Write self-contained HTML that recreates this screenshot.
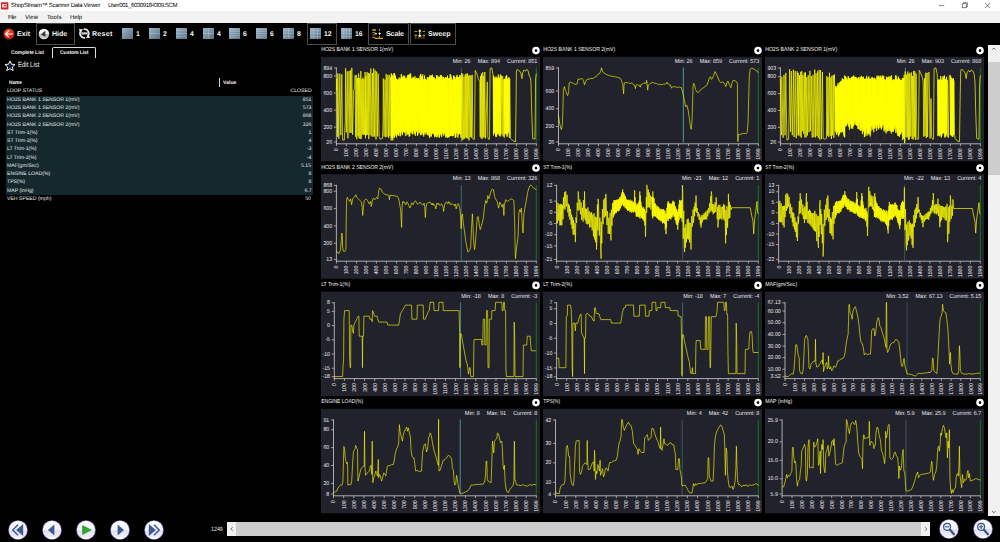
<!DOCTYPE html><html><head><meta charset="utf-8"><title>ShopStream Scanner Data Viewer</title>
<style>html,body{margin:0;padding:0;background:#000;overflow:hidden}#app{position:relative;width:1000px;height:542px;background:#000;overflow:hidden;font-family:'Liberation Sans',sans-serif;text-rendering:geometricPrecision}svg text{font-family:'Liberation Sans',sans-serif}</style></head><body><div id="app">
<div style="position:absolute;left:0.00px;top:0.00px;width:1000.00px;height:11.20px;background:#ffffff;"></div>
<div style="position:absolute;left:0.00px;top:11.20px;width:1000.00px;height:11.60px;background:#f2f2f2;"></div>
<svg style="position:absolute;left:1px;top:1.5px" width="8" height="8" viewBox="0 0 8 8"><rect x="0" y="0.3" width="7.4" height="7.2" rx="0.8" fill="#d8232a"/><rect x="1.2" y="2.2" width="4.6" height="3.2" fill="#fff"/><rect x="2.6" y="3.2" width="3.2" height="1.2" fill="#d8232a"/></svg>
<span style="position:absolute;top:2.49px;font:24.00px/1 'Liberation Sans',sans-serif;color:#000;white-space:nowrap;transform:scale(0.25,0.25);letter-spacing:-1.08px;left:11.20px;transform-origin:0 0;">ShopStream™ Scanner Data Viewer</span>
<span style="position:absolute;top:2.49px;font:24.00px/1 'Liberation Sans',sans-serif;color:#000;white-space:nowrap;transform:scale(0.25,0.25);letter-spacing:-1.50px;left:108.00px;transform-origin:0 0;">User001_60309184309.SCM</span>
<svg style="position:absolute;left:930px;top:0" width="70" height="11" viewBox="0 0 70 11"><g stroke="#333" stroke-width="0.6" fill="none"><path d="M9 5.6h5.2"/><rect x="32.2" y="3.8" width="4" height="4"/><path d="M33.4 3.8v-1.1h4v4h-1.2"/><path d="M55.2 3l5 5M60.2 3l-5 5"/></g></svg>
<span style="position:absolute;top:13.89px;font:24.00px/1 'Liberation Sans',sans-serif;color:#000;white-space:nowrap;transform:scale(0.25,0.25);letter-spacing:-1.82px;left:8.00px;transform-origin:0 0;">File</span>
<span style="position:absolute;top:13.89px;font:24.00px/1 'Liberation Sans',sans-serif;color:#000;white-space:nowrap;transform:scale(0.25,0.25);letter-spacing:0.14px;left:25.00px;transform-origin:0 0;">View</span>
<span style="position:absolute;top:13.89px;font:24.00px/1 'Liberation Sans',sans-serif;color:#000;white-space:nowrap;transform:scale(0.25,0.25);letter-spacing:0.49px;left:46.80px;transform-origin:0 0;">Tools</span>
<span style="position:absolute;top:13.89px;font:24.00px/1 'Liberation Sans',sans-serif;color:#000;white-space:nowrap;transform:scale(0.25,0.25);letter-spacing:-0.19px;left:70.00px;transform-origin:0 0;">Help</span>
<div style="position:absolute;left:36.20px;top:23.00px;width:38.60px;height:21.60px;border:1px solid #4d4d4d;box-sizing:border-box;"></div>
<div style="position:absolute;left:306.60px;top:23.00px;width:30.00px;height:21.60px;border:1px solid #4d4d4d;box-sizing:border-box;"></div>
<div style="position:absolute;left:368.20px;top:23.00px;width:41.20px;height:21.60px;border:1px solid #4d4d4d;box-sizing:border-box;"></div>
<div style="position:absolute;left:410.40px;top:23.00px;width:45.60px;height:21.60px;border:1px solid #4d4d4d;box-sizing:border-box;"></div>
<span style="position:absolute;top:29.90px;font:bold 28.40px/1 'Liberation Sans',sans-serif;color:#f4f4f4;white-space:nowrap;transform:scale(0.25,0.25);letter-spacing:-0.03px;left:17.20px;transform-origin:0 0;">Exit</span>
<span style="position:absolute;top:29.90px;font:bold 28.40px/1 'Liberation Sans',sans-serif;color:#f4f4f4;white-space:nowrap;transform:scale(0.25,0.25);letter-spacing:-0.25px;left:52.00px;transform-origin:0 0;">Hide</span>
<span style="position:absolute;top:29.90px;font:bold 28.40px/1 'Liberation Sans',sans-serif;color:#f4f4f4;white-space:nowrap;transform:scale(0.25,0.25);letter-spacing:0.96px;left:92.20px;transform-origin:0 0;">Reset</span>
<span style="position:absolute;top:29.90px;font:bold 28.40px/1 'Liberation Sans',sans-serif;color:#f4f4f4;white-space:nowrap;transform:scale(0.25,0.25);letter-spacing:-0.55px;left:385.80px;transform-origin:0 0;">Scale</span>
<span style="position:absolute;top:29.90px;font:bold 28.40px/1 'Liberation Sans',sans-serif;color:#f4f4f4;white-space:nowrap;transform:scale(0.25,0.25);letter-spacing:0.11px;left:427.60px;transform-origin:0 0;">Sweep</span>
<svg style="position:absolute;left:3px;top:27.5px" width="12" height="12" viewBox="0 0 12 12"><defs><radialGradient id="rg" cx="0.4" cy="0.3" r="0.8"><stop offset="0" stop-color="#f0522c"/><stop offset="0.6" stop-color="#d22a0e"/><stop offset="1" stop-color="#8e1905"/></radialGradient></defs><circle cx="6" cy="6" r="5.5" fill="url(#rg)"/><path d="M10 6H3M6 2.6L2.6 6l3.4 3.4" stroke="#fff" stroke-width="1.15" fill="none"/></svg>
<svg style="position:absolute;left:38px;top:27.5px" width="12" height="12" viewBox="0 0 12 12"><defs><linearGradient id="hg" x1="0" y1="0" x2="0" y2="1"><stop offset="0" stop-color="#ffffff"/><stop offset="0.5" stop-color="#e8e8e8"/><stop offset="0.52" stop-color="#b5b5b5"/><stop offset="1" stop-color="#dcdcdc"/></linearGradient></defs><circle cx="5.9" cy="6" r="5.3" fill="url(#hg)"/><path d="M7.4 2.6v6.4L3 6.4z" fill="#3a3a3a"/></svg>
<svg style="position:absolute;left:78px;top:27px" width="13" height="13" viewBox="0 0 13 13"><g fill="none" stroke="#e9e9e9" stroke-width="1.7"><path d="M7.15 10.75A4.3 4.3 0 0 1 3.2 3.6"/><path d="M5.65 2.25A4.3 4.3 0 0 1 9.6 9.4"/></g><path d="M0.9 1.9l4.2 0.3-3 3.1zM11.9 11.1l-4.2-0.3 3-3.1z" fill="#f2f2f2"/><rect x="2.7" y="5.1" width="7.6" height="2.7" rx="1.3" fill="#8c8c8c"/><path d="M3.5 6.45h6" stroke="#f4f4f4" stroke-width="0.7"/></svg>
<svg style="position:absolute;left:122px;top:28.0px" width="11.3" height="11.0" viewBox="0 0 11.3 11.0"><defs><linearGradient id="gi0" x1="0" y1="0" x2="1" y2="1"><stop offset="0" stop-color="#9db4c6"/><stop offset="1" stop-color="#566f80"/></linearGradient></defs><rect width="11.3" height="11.0" fill="url(#gi0)"/></svg>
<span style="position:absolute;top:30.06px;font:bold 27.20px/1 'Liberation Sans',sans-serif;color:#f4f4f4;white-space:nowrap;transform:scale(0.25,0.25);left:136.20px;transform-origin:0 0;">1</span>
<svg style="position:absolute;left:149px;top:28.0px" width="11.3" height="11.0" viewBox="0 0 11.3 11.0"><defs><linearGradient id="gi1" x1="0" y1="0" x2="1" y2="1"><stop offset="0" stop-color="#9db4c6"/><stop offset="1" stop-color="#566f80"/></linearGradient></defs><rect width="11.3" height="11.0" fill="url(#gi1)"/><path d="M0 5.50H11.3" stroke="#c4d4e0" stroke-width="0.5" opacity="0.85"/></svg>
<span style="position:absolute;top:30.06px;font:bold 27.20px/1 'Liberation Sans',sans-serif;color:#f4f4f4;white-space:nowrap;transform:scale(0.25,0.25);left:163.00px;transform-origin:0 0;">2</span>
<svg style="position:absolute;left:176px;top:28.0px" width="11.3" height="11.0" viewBox="0 0 11.3 11.0"><defs><linearGradient id="gi2" x1="0" y1="0" x2="1" y2="1"><stop offset="0" stop-color="#9db4c6"/><stop offset="1" stop-color="#566f80"/></linearGradient></defs><rect width="11.3" height="11.0" fill="url(#gi2)"/><path d="M0 2.75H11.3" stroke="#c4d4e0" stroke-width="0.5" opacity="0.85"/><path d="M0 5.50H11.3" stroke="#c4d4e0" stroke-width="0.5" opacity="0.85"/><path d="M0 8.25H11.3" stroke="#c4d4e0" stroke-width="0.5" opacity="0.85"/></svg>
<span style="position:absolute;top:30.06px;font:bold 27.20px/1 'Liberation Sans',sans-serif;color:#f4f4f4;white-space:nowrap;transform:scale(0.25,0.25);left:190.00px;transform-origin:0 0;">4</span>
<svg style="position:absolute;left:202.6px;top:28.0px" width="11.3" height="11.0" viewBox="0 0 11.3 11.0"><defs><linearGradient id="gi3" x1="0" y1="0" x2="1" y2="1"><stop offset="0" stop-color="#9db4c6"/><stop offset="1" stop-color="#566f80"/></linearGradient></defs><rect width="11.3" height="11.0" fill="url(#gi3)"/><path d="M0 5.50H11.3" stroke="#c4d4e0" stroke-width="0.5" opacity="0.85"/><path d="M5.65 0V11.0" stroke="#c4d4e0" stroke-width="0.5" opacity="0.85"/></svg>
<span style="position:absolute;top:30.06px;font:bold 27.20px/1 'Liberation Sans',sans-serif;color:#f4f4f4;white-space:nowrap;transform:scale(0.25,0.25);left:216.60px;transform-origin:0 0;">4</span>
<svg style="position:absolute;left:229.2px;top:28.0px" width="11.3" height="11.0" viewBox="0 0 11.3 11.0"><defs><linearGradient id="gi4" x1="0" y1="0" x2="1" y2="1"><stop offset="0" stop-color="#9db4c6"/><stop offset="1" stop-color="#566f80"/></linearGradient></defs><rect width="11.3" height="11.0" fill="url(#gi4)"/><path d="M0 1.83H11.3" stroke="#c4d4e0" stroke-width="0.5" opacity="0.85"/><path d="M0 3.67H11.3" stroke="#c4d4e0" stroke-width="0.5" opacity="0.85"/><path d="M0 5.50H11.3" stroke="#c4d4e0" stroke-width="0.5" opacity="0.85"/><path d="M0 7.33H11.3" stroke="#c4d4e0" stroke-width="0.5" opacity="0.85"/><path d="M0 9.17H11.3" stroke="#c4d4e0" stroke-width="0.5" opacity="0.85"/></svg>
<span style="position:absolute;top:30.06px;font:bold 27.20px/1 'Liberation Sans',sans-serif;color:#f4f4f4;white-space:nowrap;transform:scale(0.25,0.25);left:243.20px;transform-origin:0 0;">6</span>
<svg style="position:absolute;left:256px;top:28.0px" width="11.3" height="11.0" viewBox="0 0 11.3 11.0"><defs><linearGradient id="gi5" x1="0" y1="0" x2="1" y2="1"><stop offset="0" stop-color="#9db4c6"/><stop offset="1" stop-color="#566f80"/></linearGradient></defs><rect width="11.3" height="11.0" fill="url(#gi5)"/><path d="M0 1.83H11.3" stroke="#c4d4e0" stroke-width="0.5" opacity="0.85"/><path d="M0 3.67H11.3" stroke="#c4d4e0" stroke-width="0.5" opacity="0.85"/><path d="M0 5.50H11.3" stroke="#c4d4e0" stroke-width="0.5" opacity="0.85"/><path d="M0 7.33H11.3" stroke="#c4d4e0" stroke-width="0.5" opacity="0.85"/><path d="M0 9.17H11.3" stroke="#c4d4e0" stroke-width="0.5" opacity="0.85"/></svg>
<span style="position:absolute;top:30.06px;font:bold 27.20px/1 'Liberation Sans',sans-serif;color:#f4f4f4;white-space:nowrap;transform:scale(0.25,0.25);left:270.00px;transform-origin:0 0;">6</span>
<svg style="position:absolute;left:283px;top:28.0px" width="11.3" height="11.0" viewBox="0 0 11.3 11.0"><defs><linearGradient id="gi6" x1="0" y1="0" x2="1" y2="1"><stop offset="0" stop-color="#9db4c6"/><stop offset="1" stop-color="#566f80"/></linearGradient></defs><rect width="11.3" height="11.0" fill="url(#gi6)"/><path d="M0 2.75H11.3" stroke="#c4d4e0" stroke-width="0.5" opacity="0.85"/><path d="M0 5.50H11.3" stroke="#c4d4e0" stroke-width="0.5" opacity="0.85"/><path d="M0 8.25H11.3" stroke="#c4d4e0" stroke-width="0.5" opacity="0.85"/><path d="M5.65 0V11.0" stroke="#c4d4e0" stroke-width="0.5" opacity="0.85"/></svg>
<span style="position:absolute;top:30.06px;font:bold 27.20px/1 'Liberation Sans',sans-serif;color:#f4f4f4;white-space:nowrap;transform:scale(0.25,0.25);left:297.20px;transform-origin:0 0;">8</span>
<svg style="position:absolute;left:310px;top:28.0px" width="11.3" height="11.0" viewBox="0 0 11.3 11.0"><defs><linearGradient id="gi7" x1="0" y1="0" x2="1" y2="1"><stop offset="0" stop-color="#9db4c6"/><stop offset="1" stop-color="#566f80"/></linearGradient></defs><rect width="11.3" height="11.0" fill="url(#gi7)"/><path d="M0 2.75H11.3" stroke="#c4d4e0" stroke-width="0.5" opacity="0.85"/><path d="M0 5.50H11.3" stroke="#c4d4e0" stroke-width="0.5" opacity="0.85"/><path d="M0 8.25H11.3" stroke="#c4d4e0" stroke-width="0.5" opacity="0.85"/><path d="M3.77 0V11.0" stroke="#c4d4e0" stroke-width="0.5" opacity="0.85"/><path d="M7.53 0V11.0" stroke="#c4d4e0" stroke-width="0.5" opacity="0.85"/></svg>
<span style="position:absolute;top:30.06px;font:bold 27.20px/1 'Liberation Sans',sans-serif;color:#f4f4f4;white-space:nowrap;transform:scale(0.25,0.25);left:323.60px;transform-origin:0 0;">12</span>
<svg style="position:absolute;left:341px;top:28.0px" width="11.3" height="11.0" viewBox="0 0 11.3 11.0"><defs><linearGradient id="gi8" x1="0" y1="0" x2="1" y2="1"><stop offset="0" stop-color="#9db4c6"/><stop offset="1" stop-color="#566f80"/></linearGradient></defs><rect width="11.3" height="11.0" fill="url(#gi8)"/><path d="M0 2.75H11.3" stroke="#c4d4e0" stroke-width="0.5" opacity="0.85"/><path d="M0 5.50H11.3" stroke="#c4d4e0" stroke-width="0.5" opacity="0.85"/><path d="M0 8.25H11.3" stroke="#c4d4e0" stroke-width="0.5" opacity="0.85"/><path d="M2.83 0V11.0" stroke="#c4d4e0" stroke-width="0.5" opacity="0.85"/><path d="M5.65 0V11.0" stroke="#c4d4e0" stroke-width="0.5" opacity="0.85"/><path d="M8.48 0V11.0" stroke="#c4d4e0" stroke-width="0.5" opacity="0.85"/></svg>
<span style="position:absolute;top:30.06px;font:bold 27.20px/1 'Liberation Sans',sans-serif;color:#f4f4f4;white-space:nowrap;transform:scale(0.25,0.25);left:354.60px;transform-origin:0 0;">16</span>
<svg style="position:absolute;left:372px;top:28px" width="12" height="12" viewBox="0 0 12 12"><g stroke="#e2b200" fill="none"><path d="M0.3 2h3.6" stroke-width="1.5"/><path d="M0.2 4.65h2.8" stroke-width="0.8"/><path d="M0.3 6.9h2.4" stroke-width="1.2" opacity="0.6"/><path d="M0.2 9.35h2.8" stroke-width="0.9"/><path d="M2.8 10.35h8.2" stroke-width="1.1"/><path d="M7.55 1v1.8M7.55 7.8v2.4" stroke-width="0.9"/><path d="M2.9 9.4v0.6" stroke-width="0.8"/></g><path d="M3.9 4.3l0.5 1 1 0.5-1 0.5-0.5 1-0.5-1-1-0.5 1-0.5zM7.6 4l0.55 1.05 1.05 0.55-1.05 0.55L7.6 7.2l-0.55-1.05L6 5.6l1.05-0.55z" fill="#fff"/></svg>
<svg style="position:absolute;left:413.6px;top:28px" width="12" height="12" viewBox="0 0 12 12"><g stroke="#dcae00" fill="none"><path d="M0.4 3.45h3M8.6 3.45h2.4" stroke-width="0.9"/><path d="M0.4 7.25h3M8.6 7.25h2.6" stroke-width="1.1"/><g stroke-width="0.9" opacity="0.75"><path d="M1.8 7.8v3M4.7 7.8v3M7 7.8v3M9.9 7.8v3"/></g><path d="M10.9 0.3v7.4" stroke-width="0.7" opacity="0.45" stroke-dasharray="1.4 0.8"/></g><path d="M5.8 2v6.6" stroke="#fff" stroke-width="0.9"/><path d="M5.8 1.3l1.6 2.2H4.2zM5.8 6.4l1.5 1.3-1.5 1.3-1.5-1.3z" fill="#fff"/></svg>
<span style="position:absolute;top:49.52px;font:bold 20.80px/1 'Liberation Sans',sans-serif;color:#f0f0f0;white-space:nowrap;transform:scale(0.25,0.25);letter-spacing:-0.46px;left:11.00px;transform-origin:0 0;">Complete List</span>
<div style="position:absolute;left:51.6px;top:46.8px;width:44px;height:11px;border:1px solid #dcdcdc;border-bottom:none;border-radius:2px 2px 0 0;box-sizing:border-box"></div>
<span style="position:absolute;top:49.52px;font:bold 20.80px/1 'Liberation Sans',sans-serif;color:#f0f0f0;white-space:nowrap;transform:scale(0.25,0.25);letter-spacing:-0.58px;left:59.60px;transform-origin:0 0;">Custom List</span>
<svg style="position:absolute;left:4.4px;top:59.8px" width="12" height="12" viewBox="0 0 12 12"><path d="M6 0.9l1.45 3.3 3.6.35-2.7 2.4.8 3.55L6 8.65 2.85 10.5l.8-3.55-2.7-2.4 3.6-.35z" fill="#0c1c3c" stroke="#f2f2f2" stroke-width="1"/></svg>
<span style="position:absolute;top:61.48px;font:30.00px/1 'Liberation Sans',sans-serif;color:#f4f4f4;white-space:nowrap;transform:scale(0.2005329585053735,0.25);left:18.00px;transform-origin:0 0;">Edit List</span>
<span style="position:absolute;top:79.82px;font:bold 20.80px/1 'Liberation Sans',sans-serif;color:#f0f0f0;white-space:nowrap;transform:scale(0.22946963829848263,0.25);left:9.30px;transform-origin:0 0;">Name</span>
<div style="position:absolute;left:218.80px;top:77.60px;width:0.90px;height:9.00px;background:#d0d0d0;"></div>
<span style="position:absolute;top:79.82px;font:bold 20.80px/1 'Liberation Sans',sans-serif;color:#f0f0f0;white-space:nowrap;transform:scale(0.24655864392745838,0.25);left:223.00px;transform-origin:0 0;">Value</span>
<div style="position:absolute;left:6.00px;top:96.00px;width:307.00px;height:98.60px;background:#14282d;"></div>
<span style="position:absolute;top:88.44px;font:20.60px/1 'Liberation Sans',sans-serif;color:#e6e6e6;white-space:nowrap;transform:scale(0.25,0.25);left:7.40px;transform-origin:0 0;">LOOP STATUS</span>
<span style="position:absolute;top:88.44px;font:20.60px/1 'Liberation Sans',sans-serif;color:#e6e6e6;white-space:nowrap;transform:scale(0.25,0.25);right:688.80px;transform-origin:100% 0;">CLOSED</span>
<span style="position:absolute;top:96.71px;font:20.60px/1 'Liberation Sans',sans-serif;color:#e6e6e6;white-space:nowrap;transform:scale(0.25,0.25);left:7.40px;transform-origin:0 0;">HO2S BANK 1 SENSOR 1(mV)</span>
<span style="position:absolute;top:96.71px;font:20.60px/1 'Liberation Sans',sans-serif;color:#e6e6e6;white-space:nowrap;transform:scale(0.25,0.25);right:688.80px;transform-origin:100% 0;">851</span>
<span style="position:absolute;top:104.98px;font:20.60px/1 'Liberation Sans',sans-serif;color:#e6e6e6;white-space:nowrap;transform:scale(0.25,0.25);left:7.40px;transform-origin:0 0;">HO2S BANK 1 SENSOR 2(mV)</span>
<span style="position:absolute;top:104.98px;font:20.60px/1 'Liberation Sans',sans-serif;color:#e6e6e6;white-space:nowrap;transform:scale(0.25,0.25);right:688.80px;transform-origin:100% 0;">573</span>
<span style="position:absolute;top:113.25px;font:20.60px/1 'Liberation Sans',sans-serif;color:#e6e6e6;white-space:nowrap;transform:scale(0.25,0.25);left:7.40px;transform-origin:0 0;">HO2S BANK 2 SENSOR 1(mV)</span>
<span style="position:absolute;top:113.25px;font:20.60px/1 'Liberation Sans',sans-serif;color:#e6e6e6;white-space:nowrap;transform:scale(0.25,0.25);right:688.80px;transform-origin:100% 0;">868</span>
<span style="position:absolute;top:121.52px;font:20.60px/1 'Liberation Sans',sans-serif;color:#e6e6e6;white-space:nowrap;transform:scale(0.25,0.25);left:7.40px;transform-origin:0 0;">HO2S BANK 2 SENSOR 2(mV)</span>
<span style="position:absolute;top:121.52px;font:20.60px/1 'Liberation Sans',sans-serif;color:#e6e6e6;white-space:nowrap;transform:scale(0.25,0.25);right:688.80px;transform-origin:100% 0;">326</span>
<span style="position:absolute;top:129.79px;font:20.60px/1 'Liberation Sans',sans-serif;color:#e6e6e6;white-space:nowrap;transform:scale(0.25,0.25);left:7.40px;transform-origin:0 0;">ST Trim-1(%)</span>
<span style="position:absolute;top:129.79px;font:20.60px/1 'Liberation Sans',sans-serif;color:#e6e6e6;white-space:nowrap;transform:scale(0.25,0.25);right:688.80px;transform-origin:100% 0;">1</span>
<span style="position:absolute;top:138.06px;font:20.60px/1 'Liberation Sans',sans-serif;color:#e6e6e6;white-space:nowrap;transform:scale(0.25,0.25);left:7.40px;transform-origin:0 0;">ST Trim-2(%)</span>
<span style="position:absolute;top:138.06px;font:20.60px/1 'Liberation Sans',sans-serif;color:#e6e6e6;white-space:nowrap;transform:scale(0.25,0.25);right:688.80px;transform-origin:100% 0;">4</span>
<span style="position:absolute;top:146.33px;font:20.60px/1 'Liberation Sans',sans-serif;color:#e6e6e6;white-space:nowrap;transform:scale(0.25,0.25);left:7.40px;transform-origin:0 0;">LT Trim-1(%)</span>
<span style="position:absolute;top:146.33px;font:20.60px/1 'Liberation Sans',sans-serif;color:#e6e6e6;white-space:nowrap;transform:scale(0.25,0.25);right:688.80px;transform-origin:100% 0;">-3</span>
<span style="position:absolute;top:154.60px;font:20.60px/1 'Liberation Sans',sans-serif;color:#e6e6e6;white-space:nowrap;transform:scale(0.25,0.25);left:7.40px;transform-origin:0 0;">LT Trim-2(%)</span>
<span style="position:absolute;top:154.60px;font:20.60px/1 'Liberation Sans',sans-serif;color:#e6e6e6;white-space:nowrap;transform:scale(0.25,0.25);right:688.80px;transform-origin:100% 0;">-4</span>
<span style="position:absolute;top:162.87px;font:20.60px/1 'Liberation Sans',sans-serif;color:#e6e6e6;white-space:nowrap;transform:scale(0.25,0.25);left:7.40px;transform-origin:0 0;">MAF(gm/Sec)</span>
<span style="position:absolute;top:162.87px;font:20.60px/1 'Liberation Sans',sans-serif;color:#e6e6e6;white-space:nowrap;transform:scale(0.25,0.25);right:688.80px;transform-origin:100% 0;">5.15</span>
<span style="position:absolute;top:171.14px;font:20.60px/1 'Liberation Sans',sans-serif;color:#e6e6e6;white-space:nowrap;transform:scale(0.25,0.25);left:7.40px;transform-origin:0 0;">ENGINE LOAD(%)</span>
<span style="position:absolute;top:171.14px;font:20.60px/1 'Liberation Sans',sans-serif;color:#e6e6e6;white-space:nowrap;transform:scale(0.25,0.25);right:688.80px;transform-origin:100% 0;">8</span>
<span style="position:absolute;top:179.41px;font:20.60px/1 'Liberation Sans',sans-serif;color:#e6e6e6;white-space:nowrap;transform:scale(0.25,0.25);left:7.40px;transform-origin:0 0;">TPS(%)</span>
<span style="position:absolute;top:179.41px;font:20.60px/1 'Liberation Sans',sans-serif;color:#e6e6e6;white-space:nowrap;transform:scale(0.25,0.25);right:688.80px;transform-origin:100% 0;">8</span>
<span style="position:absolute;top:187.68px;font:20.60px/1 'Liberation Sans',sans-serif;color:#e6e6e6;white-space:nowrap;transform:scale(0.25,0.25);left:7.40px;transform-origin:0 0;">MAP (inHg)</span>
<span style="position:absolute;top:187.68px;font:20.60px/1 'Liberation Sans',sans-serif;color:#e6e6e6;white-space:nowrap;transform:scale(0.25,0.25);right:688.80px;transform-origin:100% 0;">6.7</span>
<span style="position:absolute;top:195.95px;font:20.60px/1 'Liberation Sans',sans-serif;color:#e6e6e6;white-space:nowrap;transform:scale(0.25,0.25);left:7.40px;transform-origin:0 0;">VEH SPEED (mph)</span>
<span style="position:absolute;top:195.95px;font:20.60px/1 'Liberation Sans',sans-serif;color:#e6e6e6;white-space:nowrap;transform:scale(0.25,0.25);right:688.80px;transform-origin:100% 0;">50</span>
<svg style="position:absolute;left:6.6px;top:518.7px" width="22" height="22" viewBox="-11 -11 22 22"><defs><linearGradient id="rb0" x1="0" y1="0" x2="0" y2="1"><stop offset="0" stop-color="#ffffff"/><stop offset="0.5" stop-color="#f3f3fb"/><stop offset="0.53" stop-color="#e0e0f1"/><stop offset="0.85" stop-color="#ececf8"/><stop offset="1" stop-color="#ffffff"/></linearGradient></defs><circle r="9.8" fill="#7466b4"/><circle r="9.200000000000001" fill="url(#rb0)"/><path d="M5.2 -5.9v11.8L-1.9 0z" fill="#3d5b93"/><path d="M0 -5.3L-5.2 0 0 5.3" fill="none" stroke="#3d5b93" stroke-width="1.5"/></svg>
<svg style="position:absolute;left:41.0px;top:518.7px" width="22" height="22" viewBox="-11 -11 22 22"><defs><linearGradient id="rb1" x1="0" y1="0" x2="0" y2="1"><stop offset="0" stop-color="#ffffff"/><stop offset="0.5" stop-color="#f3f3fb"/><stop offset="0.53" stop-color="#e0e0f1"/><stop offset="0.85" stop-color="#ececf8"/><stop offset="1" stop-color="#ffffff"/></linearGradient></defs><circle r="9.8" fill="#7466b4"/><circle r="9.200000000000001" fill="url(#rb1)"/><path d="M2.4 -5.6v11.2L-4 0z" fill="#3d5b93"/></svg>
<svg style="position:absolute;left:75.0px;top:518.7px" width="22" height="22" viewBox="-11 -11 22 22"><defs><linearGradient id="rb2" x1="0" y1="0" x2="0" y2="1"><stop offset="0" stop-color="#ffffff"/><stop offset="0.5" stop-color="#f3f3fb"/><stop offset="0.53" stop-color="#e0e0f1"/><stop offset="0.85" stop-color="#ececf8"/><stop offset="1" stop-color="#ffffff"/></linearGradient></defs><circle r="9.8" fill="#7466b4"/><circle r="9.200000000000001" fill="url(#rb2)"/><path d="M-3.8 -4.9v9.8L6 0z" fill="#2ea32e"/></svg>
<svg style="position:absolute;left:109.0px;top:518.7px" width="22" height="22" viewBox="-11 -11 22 22"><defs><linearGradient id="rb3" x1="0" y1="0" x2="0" y2="1"><stop offset="0" stop-color="#ffffff"/><stop offset="0.5" stop-color="#f3f3fb"/><stop offset="0.53" stop-color="#e0e0f1"/><stop offset="0.85" stop-color="#ececf8"/><stop offset="1" stop-color="#ffffff"/></linearGradient></defs><circle r="9.8" fill="#7466b4"/><circle r="9.200000000000001" fill="url(#rb3)"/><path d="M-2.4 -5.6v11.2L4 0z" fill="#3d5b93"/></svg>
<svg style="position:absolute;left:143.0px;top:518.7px" width="22" height="22" viewBox="-11 -11 22 22"><defs><linearGradient id="rb4" x1="0" y1="0" x2="0" y2="1"><stop offset="0" stop-color="#ffffff"/><stop offset="0.5" stop-color="#f3f3fb"/><stop offset="0.53" stop-color="#e0e0f1"/><stop offset="0.85" stop-color="#ececf8"/><stop offset="1" stop-color="#ffffff"/></linearGradient></defs><circle r="9.8" fill="#7466b4"/><circle r="9.200000000000001" fill="url(#rb4)"/><path d="M-5.2 -5.9v11.8L1.9 0z" fill="#3d5b93"/><path d="M0 -5.3L5.2 0 0 5.3" fill="none" stroke="#3d5b93" stroke-width="1.5"/></svg>
<svg style="position:absolute;left:937.7px;top:518.2px" width="22" height="22" viewBox="-11 -11 22 22"><defs><linearGradient id="rb5" x1="0" y1="0" x2="0" y2="1"><stop offset="0" stop-color="#ffffff"/><stop offset="0.5" stop-color="#f3f3fb"/><stop offset="0.53" stop-color="#e0e0f1"/><stop offset="0.85" stop-color="#ececf8"/><stop offset="1" stop-color="#ffffff"/></linearGradient></defs><circle r="9.8" fill="#7466b4"/><circle r="9.200000000000001" fill="url(#rb5)"/><circle cx="-1.9" cy="-2.2" r="3.5" fill="#f0f2fb" stroke="#3c5488" stroke-width="1.2"/><path d="M1 0.8L4.9 5.2" stroke="#3c5488" stroke-width="2.3" stroke-linecap="round"/><path d="M-4 -2.2h4.2" stroke="#3c5488" stroke-width="1.1"/></svg>
<svg style="position:absolute;left:972.0px;top:518.2px" width="22" height="22" viewBox="-11 -11 22 22"><defs><linearGradient id="rb6" x1="0" y1="0" x2="0" y2="1"><stop offset="0" stop-color="#ffffff"/><stop offset="0.5" stop-color="#f3f3fb"/><stop offset="0.53" stop-color="#e0e0f1"/><stop offset="0.85" stop-color="#ececf8"/><stop offset="1" stop-color="#ffffff"/></linearGradient></defs><circle r="9.8" fill="#7466b4"/><circle r="9.200000000000001" fill="url(#rb6)"/><circle cx="-1.9" cy="-2.2" r="3.5" fill="#f0f2fb" stroke="#3c5488" stroke-width="1.2"/><path d="M1 0.8L4.9 5.2" stroke="#3c5488" stroke-width="2.3" stroke-linecap="round"/><path d="M-4 -2.2h4.2" stroke="#3c5488" stroke-width="1.1"/><path d="M-1.9 -4.3v4.2" stroke="#3c5488" stroke-width="1.1"/></svg>
<span style="position:absolute;top:526.38px;font:24.80px/1 'Liberation Sans',sans-serif;color:#e8e8e8;white-space:nowrap;transform:scale(0.21387563494329123,0.25);left:211.00px;transform-origin:0 0;">1249</span>
<div style="position:absolute;left:227.40px;top:522.40px;width:702.40px;height:13.40px;background:#cdcdcd;"></div>
<div style="position:absolute;left:227.40px;top:522.40px;width:8.60px;height:13.40px;background:#f0f0f0;"></div>
<div style="position:absolute;left:921.00px;top:522.40px;width:8.80px;height:13.40px;background:#f0f0f0;"></div>
<svg style="position:absolute;left:227px;top:522px" width="703" height="14" viewBox="0 0 703 14"><path d="M5.6 5.2L3.8 7l1.8 1.8M698 5.2l1.8 1.8-1.8 1.8" stroke="#505050" stroke-width="0.8" fill="none"/></svg>
<div style="position:absolute;left:988.20px;top:44.80px;width:11.80px;height:471.20px;background:#f0f0f0;"></div>
<div style="position:absolute;left:988.20px;top:61.60px;width:11.80px;height:113.60px;background:#cdcdcd;"></div>
<svg style="position:absolute;left:988px;top:45px" width="12" height="471" viewBox="0 0 12 471"><path d="M4 4.8L5.8 3l1.8 1.8M4 466L5.8 467.8l1.8-1.8" stroke="#505050" stroke-width="0.8" fill="none"/></svg>
<svg style="position:absolute;left:0;top:0" width="1000" height="542" viewBox="0 0 1000 542" text-rendering="geometricPrecision"><rect x="321" y="56.8" width="219" height="104.5" fill="#22222c"/><text x="321.2" y="51.40" font-size="5.8" fill="#f6f6f6" textLength="72" lengthAdjust="spacingAndGlyphs">HO2S BANK 1 SENSOR 1(mV)</text><circle cx="536" cy="50.60" r="2.55" fill="none" stroke="#fff" stroke-width="2.5"/><text transform="translate(537.30 62.70) scale(0.92 1)" font-size="5.92" fill="#ececec" text-anchor="end">Current: 851</text><text transform="translate(500.00 62.70) scale(0.92 1)" font-size="5.92" fill="#ececec" text-anchor="end">Max: 894</text><text transform="translate(470.59 62.70) scale(0.92 1)" font-size="5.92" fill="#ececec" text-anchor="end">Min: 26</text><path d="M336.40 67.40V144.20M336.00 143.80H536.80" stroke="#cfcfcf" stroke-width="0.8" fill="none"/><text transform="translate(332.10 69.60) scale(0.92 1)" font-size="5.65" fill="#ececec" text-anchor="end">894</text><text transform="translate(332.10 77.61) scale(0.92 1)" font-size="5.65" fill="#ececec" text-anchor="end">800</text><text transform="translate(332.10 94.66) scale(0.92 1)" font-size="5.65" fill="#ececec" text-anchor="end">600</text><text transform="translate(332.10 111.72) scale(0.92 1)" font-size="5.65" fill="#ececec" text-anchor="end">400</text><text transform="translate(332.10 128.77) scale(0.92 1)" font-size="5.65" fill="#ececec" text-anchor="end">200</text><text transform="translate(332.10 143.60) scale(0.92 1)" font-size="5.65" fill="#ececec" text-anchor="end">26</text><text transform="translate(338.35 148.30) rotate(-90) scale(0.92 1)" font-size="5.65" fill="#ececec" text-anchor="end">0</text><text transform="translate(348.35 148.30) rotate(-90) scale(0.92 1)" font-size="5.65" fill="#ececec" text-anchor="end">100</text><text transform="translate(358.35 148.30) rotate(-90) scale(0.92 1)" font-size="5.65" fill="#ececec" text-anchor="end">200</text><text transform="translate(368.35 148.30) rotate(-90) scale(0.92 1)" font-size="5.65" fill="#ececec" text-anchor="end">300</text><text transform="translate(378.35 148.30) rotate(-90) scale(0.92 1)" font-size="5.65" fill="#ececec" text-anchor="end">400</text><text transform="translate(388.35 148.30) rotate(-90) scale(0.92 1)" font-size="5.65" fill="#ececec" text-anchor="end">500</text><text transform="translate(398.35 148.30) rotate(-90) scale(0.92 1)" font-size="5.65" fill="#ececec" text-anchor="end">600</text><text transform="translate(408.35 148.30) rotate(-90) scale(0.92 1)" font-size="5.65" fill="#ececec" text-anchor="end">700</text><text transform="translate(418.35 148.30) rotate(-90) scale(0.92 1)" font-size="5.65" fill="#ececec" text-anchor="end">800</text><text transform="translate(428.35 148.30) rotate(-90) scale(0.92 1)" font-size="5.65" fill="#ececec" text-anchor="end">900</text><text transform="translate(438.35 148.30) rotate(-90) scale(0.92 1)" font-size="5.65" fill="#ececec" text-anchor="end">1000</text><text transform="translate(448.35 148.30) rotate(-90) scale(0.92 1)" font-size="5.65" fill="#ececec" text-anchor="end">1100</text><text transform="translate(458.35 148.30) rotate(-90) scale(0.92 1)" font-size="5.65" fill="#ececec" text-anchor="end">1200</text><text transform="translate(468.35 148.30) rotate(-90) scale(0.92 1)" font-size="5.65" fill="#ececec" text-anchor="end">1300</text><text transform="translate(478.35 148.30) rotate(-90) scale(0.92 1)" font-size="5.65" fill="#ececec" text-anchor="end">1400</text><text transform="translate(488.35 148.30) rotate(-90) scale(0.92 1)" font-size="5.65" fill="#ececec" text-anchor="end">1500</text><text transform="translate(498.35 148.30) rotate(-90) scale(0.92 1)" font-size="5.65" fill="#ececec" text-anchor="end">1600</text><text transform="translate(508.35 148.30) rotate(-90) scale(0.92 1)" font-size="5.65" fill="#ececec" text-anchor="end">1700</text><text transform="translate(518.35 148.30) rotate(-90) scale(0.92 1)" font-size="5.65" fill="#ececec" text-anchor="end">1800</text><text transform="translate(528.35 148.30) rotate(-90) scale(0.92 1)" font-size="5.65" fill="#ececec" text-anchor="end">1900</text><text transform="translate(538.25 148.30) rotate(-90) scale(0.92 1)" font-size="5.65" fill="#ececec" text-anchor="end">1999</text><path d="M333.80 68.00H336.40M333.80 76.01H336.40M333.80 93.06H336.40M333.80 110.12H336.40M333.80 127.17H336.40M333.80 142.00H336.40M336.40 143.80V146.20M346.40 143.80V146.20M356.40 143.80V146.20M366.40 143.80V146.20M376.40 143.80V146.20M386.40 143.80V146.20M396.40 143.80V146.20M406.40 143.80V146.20M416.40 143.80V146.20M426.40 143.80V146.20M436.40 143.80V146.20M446.40 143.80V146.20M456.40 143.80V146.20M466.40 143.80V146.20M476.40 143.80V146.20M486.40 143.80V146.20M496.40 143.80V146.20M506.40 143.80V146.20M516.40 143.80V146.20M526.40 143.80V146.20M536.30 143.80V146.20" stroke="#cfcfcf" stroke-width="0.7" fill="none"/><path d="M461.30 67.60V142.60" stroke="#5cb4ba" stroke-width="0.8" opacity="0.5"/><path d="M536.30 67.60V142.60" stroke="#0f8a14" stroke-width="0.8"/><polygon points="390.8,77.8 391.3,73.4 391.9,74.6 392.4,75.9 393.2,78.3 393.8,73.4 394.6,73.4 395.4,75.6 396.1,78.7 396.9,79.1 397.7,79.9 398.5,79.6 399.2,77.5 399.9,80.5 400.6,78.7 401.3,73.9 402.1,76.8 402.7,77.8 403.3,75.5 404.0,79.9 404.7,75.7 405.4,79.2 406.1,77.5 406.8,79.4 407.6,75.3 408.2,74.8 408.8,75.6 409.5,73.8 410.0,78.5 410.7,73.4 411.2,79.3 411.8,77.9 412.4,79.2 413.1,76.8 413.7,78.5 414.3,78.4 415.0,76.2 415.7,80.1 416.4,77.9 417.1,79.7 417.8,78.0 418.5,78.0 419.3,80.4 420.1,75.6 420.8,73.9 421.5,76.8 422.0,79.1 422.7,74.3 423.3,79.4 424.0,80.2 424.6,75.4 425.3,79.4 426.0,79.5 426.8,80.4 427.4,77.2 428.0,80.4 428.7,77.4 429.3,77.2 430.0,75.2 430.6,79.2 430.3,132.2 429.6,138.1 429.0,136.0 428.3,133.7 427.7,135.1 427.1,134.7 426.4,131.8 425.7,132.4 425.0,134.6 424.3,131.4 423.7,136.6 422.9,133.3 422.3,131.8 421.8,135.1 421.1,133.1 420.5,135.2 419.7,132.9 418.9,130.6 418.1,134.3 417.5,136.0 416.8,131.9 416.0,130.1 415.4,135.8 414.6,133.7 414.0,131.3 413.4,129.4 412.9,134.3 412.1,134.0 411.5,130.4 411.0,132.7 410.3,131.7 409.8,135.9 409.2,136.7 408.5,134.1 407.9,132.9 407.2,134.8 406.4,130.6 405.8,136.1 405.1,131.2 404.3,133.0 403.7,131.3 403.1,131.9 402.3,135.4 401.7,130.7 400.9,134.0 400.3,136.3 399.5,131.8 398.8,136.0 398.1,134.7 397.3,134.4 396.5,137.5 395.8,132.9 395.0,136.1 394.2,138.0 393.5,134.1 392.8,140.4 392.2,137.7 391.6,136.9 391.1,140.5" fill="#ffff00"/><path d="M396.93 79.8V112.4M418.70 117.5V140.8M422.37 79.8V93.0M408.99 79.8V116.9M428.09 79.8V99.5M421.13 79.8V95.8M398.60 79.8V108.3M428.72 79.8V117.6M412.86 125.2V140.8M397.50 111.3V140.8M391.49 79.8V112.5M413.28 79.8V114.4M426.79 79.8V103.3M416.06 111.3V140.8M412.80 121.0V140.8M419.15 118.9V140.8M402.54 79.8V105.6M404.61 116.1V140.8" stroke="#4a4a14" stroke-width="0.4" opacity="0.85" fill="none"/><polygon points="430.0,76.8 430.7,79.5 431.1,75.1 431.7,76.1 432.5,74.7 433.1,77.1 433.7,77.1 434.3,77.8 435.0,79.1 435.7,79.3 436.4,75.2 437.1,75.4 437.7,78.9 438.3,76.4 438.9,78.0 439.6,77.0 440.4,75.1 440.8,77.2 441.4,75.0 442.1,79.5 442.8,76.7 443.5,77.0 444.1,78.1 444.8,78.4 445.4,77.0 446.0,78.2 446.7,77.5 447.5,75.5 448.3,78.8 449.0,78.1 449.7,78.3 450.2,74.0 450.9,75.3 451.6,77.9 452.3,79.9 453.0,79.8 453.6,75.5 454.2,76.2 454.9,77.2 455.6,79.9 456.2,77.5 457.0,74.9 457.6,77.6 458.2,77.1 458.8,77.9 459.6,75.7 460.0,74.9 460.8,78.4 461.5,74.4 461.1,138.0 460.4,134.4 459.8,133.5 459.2,133.8 458.6,134.3 457.9,137.7 457.3,133.1 456.6,132.4 455.9,136.9 455.2,137.9 454.5,133.6 454.0,132.4 453.3,135.8 452.6,136.3 452.0,135.3 451.3,136.1 450.6,135.9 449.9,134.1 449.4,136.7 448.6,137.4 447.9,136.5 447.1,138.0 446.4,135.8 445.6,137.4 445.1,133.2 444.5,133.2 443.8,135.7 443.2,134.0 442.4,132.5 441.7,137.1 441.2,135.5 440.6,132.7 440.0,135.1 439.3,137.9 438.7,132.2 438.0,136.8 437.5,133.6 436.8,137.4 436.0,134.0 435.3,136.5 434.7,137.2 434.0,133.3 433.4,134.3 432.8,133.6 432.1,132.7 431.4,136.2 430.9,136.7 430.3,133.2" fill="#ffff00"/><path d="M445.25 125.1V140.8M457.66 113.9V140.8M456.35 123.1V140.8M453.89 79.8V104.6M448.27 79.8V109.7M456.77 79.8V111.9M452.04 79.8V92.2M448.66 79.8V99.5M449.45 123.8V140.8M447.83 79.8V91.2M433.98 79.8V105.5M452.46 79.8V101.7M459.06 79.8V110.8M449.36 118.3V140.8" stroke="#4a4a14" stroke-width="0.4" opacity="0.85" fill="none"/><polygon points="493.1,74.5 493.9,76.2 494.6,78.4 495.3,78.8 496.0,76.5 496.7,77.9 497.5,78.4 498.3,74.5 499.0,77.3 499.7,78.6 500.4,74.4 500.7,136.4 500.0,133.4 499.4,136.2 498.8,132.6 498.0,134.6 497.2,134.0 496.3,136.9 495.7,136.7 495.1,132.5 494.3,133.3 493.5,135.4" fill="#ffff00"/><path d="M497.22 112.0V140.8M498.90 109.7V140.8M494.93 79.8V93.4" stroke="#4a4a14" stroke-width="0.4" opacity="0.85" fill="none"/><polygon points="503.8,79.4 504.6,78.7 505.2,79.5 506.0,76.1 506.7,75.1 507.5,78.9 508.3,79.2 508.9,77.2 509.7,78.8 509.3,137.9 508.6,132.2 507.8,133.1 507.1,136.8 506.4,134.4 505.7,133.6 504.9,134.0 504.2,137.5" fill="#ffff00"/><path d="M504.95 111.3V140.8M504.59 116.8V140.8" stroke="#4a4a14" stroke-width="0.4" opacity="0.85" fill="none"/><polyline points="336.4,90.2 336.9,78.6 337.6,136.7 337.8,73.4 338.8,138.8 339.8,73.7 340.8,135.2 341.8,74.3 342.6,140.1 344.3,140.1 345.3,120.1 345.6,68.3 346.3,132.4 347.3,71.3 347.9,138.3 349.0,71.1 349.9,132.8 350.4,70.4 351.1,133.0 351.8,67.9 352.6,134.7 353.7,90.2 354.7,88.6 355.1,75.4 355.7,136.7 356.3,74.9 356.8,139.2 357.5,78.1 358.1,135.8 358.6,73.5 359.0,138.1 359.6,78.2 360.1,139.0 360.8,71.1 361.2,138.8 361.8,79.3 362.3,134.6 362.9,77.6 363.4,134.7 363.9,79.1 364.6,134.8 365.1,72.0 365.5,138.2 365.9,75.8 366.5,135.2 367.1,72.2 367.7,134.8 368.3,72.9 368.8,139.1 369.4,73.6 370.1,135.3 370.7,78.2 370.8,68.5 371.8,136.4 372.4,72.9 373.1,136.8 373.7,68.4 374.5,136.5 375.2,70.3 376.0,139.4 376.7,71.6 377.6,136.3 378.2,73.8 379.1,136.6 380.0,139.2 382.5,138.4 383.0,123.4 383.3,78.5 384.1,136.6 385.0,79.5 385.7,137.3 386.2,73.9 387.0,136.7 387.8,75.3 388.6,137.9 389.2,74.8 389.9,136.1 390.5,77.3 390.8,77.8 391.1,140.5 391.3,73.4 391.6,136.9 391.9,74.6 392.2,137.7 392.4,75.9 392.8,140.4 393.2,78.3 393.5,134.1 393.8,73.4 394.2,138.0 394.6,73.4 395.0,136.1 395.4,75.6 395.8,132.9 396.1,78.7 396.5,137.5 396.9,79.1 397.3,134.4 397.7,79.9 398.1,134.7 398.5,79.6 398.8,136.0 399.2,77.5 399.5,131.8 399.9,80.5 400.3,136.3 400.6,78.7 400.9,134.0 401.3,73.9 401.7,130.7 402.1,76.8 402.3,135.4 402.7,77.8 403.1,131.9 403.3,75.5 403.7,131.3 404.0,79.9 404.3,133.0 404.7,75.7 405.1,131.2 405.4,79.2 405.8,136.1 406.1,77.5 406.4,130.6 406.8,79.4 407.2,134.8 407.6,75.3 407.9,132.9 408.2,74.8 408.5,134.1 408.8,75.6 409.2,136.7 409.5,73.8 409.8,135.9 410.0,78.5 410.3,131.7 410.7,73.4 411.0,132.7 411.2,79.3 411.5,130.4 411.8,77.9 412.1,134.0 412.4,79.2 412.9,134.3 413.1,76.8 413.4,129.4 413.7,78.5 414.0,131.3 414.3,78.4 414.6,133.7 415.0,76.2 415.4,135.8 415.7,80.1 416.0,130.1 416.4,77.9 416.8,131.9 417.1,79.7 417.5,136.0 417.8,78.0 418.1,134.3 418.5,78.0 418.9,130.6 419.3,80.4 419.7,132.9 420.1,75.6 420.5,135.2 420.8,73.9 421.1,133.1 421.5,76.8 421.8,135.1 422.0,79.1 422.3,131.8 422.7,74.3 422.9,133.3 423.3,79.4 423.7,136.6 424.0,80.2 424.3,131.4 424.6,75.4 425.0,134.6 425.3,79.4 425.7,132.4 426.0,79.5 426.4,131.8 426.8,80.4 427.1,134.7 427.4,77.2 427.7,135.1 428.0,80.4 428.3,133.7 428.7,77.4 429.0,136.0 429.3,77.2 429.6,138.1 430.0,75.2 430.3,132.2 430.6,79.2 430.0,76.8 430.3,133.2 430.7,79.5 430.9,136.7 431.1,75.1 431.4,136.2 431.7,76.1 432.1,132.7 432.5,74.7 432.8,133.6 433.1,77.1 433.4,134.3 433.7,77.1 434.0,133.3 434.3,77.8 434.7,137.2 435.0,79.1 435.3,136.5 435.7,79.3 436.0,134.0 436.4,75.2 436.8,137.4 437.1,75.4 437.5,133.6 437.7,78.9 438.0,136.8 438.3,76.4 438.7,132.2 438.9,78.0 439.3,137.9 439.6,77.0 440.0,135.1 440.4,75.1 440.6,132.7 440.8,77.2 441.2,135.5 441.4,75.0 441.7,137.1 442.1,79.5 442.4,132.5 442.8,76.7 443.2,134.0 443.5,77.0 443.8,135.7 444.1,78.1 444.5,133.2 444.8,78.4 445.1,133.2 445.4,77.0 445.6,137.4 446.0,78.2 446.4,135.8 446.7,77.5 447.1,138.0 447.5,75.5 447.9,136.5 448.3,78.8 448.6,137.4 449.0,78.1 449.4,136.7 449.7,78.3 449.9,134.1 450.2,74.0 450.6,135.9 450.9,75.3 451.3,136.1 451.6,77.9 452.0,135.3 452.3,79.9 452.6,136.3 453.0,79.8 453.3,135.8 453.6,75.5 454.0,132.4 454.2,76.2 454.5,133.6 454.9,77.2 455.2,137.9 455.6,79.9 455.9,136.9 456.2,77.5 456.6,132.4 457.0,74.9 457.3,133.1 457.6,77.6 457.9,137.7 458.2,77.1 458.6,134.3 458.8,77.9 459.2,133.8 459.6,75.7 459.8,133.5 460.0,74.9 460.4,134.4 460.8,78.4 461.1,138.0 461.5,74.4 461.6,73.1 462.2,140.3 462.7,73.8 463.4,139.3 464.0,76.8 464.7,138.8 465.2,74.4 465.8,137.2 466.2,73.8 466.7,138.2 467.3,73.3 467.8,138.7 468.4,75.5 469.0,140.4 469.8,75.2 470.3,136.9 471.0,75.5 471.6,137.8 472.2,74.8 472.9,139.2 474.5,139.2 475.2,70.3 476.5,72.8 478.2,78.6 479.8,81.9 480.2,136.7 480.5,75.9 481.1,138.4 481.5,73.6 482.2,138.9 482.8,72.2 483.2,136.8 483.7,76.1 484.1,137.7 484.8,72.0 485.6,138.4 486.5,106.8 487.3,81.9 487.8,136.7 488.5,139.2 489.5,139.2 490.1,68.6 491.8,67.8 492.8,73.6 493.1,74.5 493.5,135.4 493.9,76.2 494.3,133.3 494.6,78.4 495.1,132.5 495.3,78.8 495.7,136.7 496.0,76.5 496.3,136.9 496.7,77.9 497.2,134.0 497.5,78.4 498.0,134.6 498.3,74.5 498.8,132.6 499.0,77.3 499.4,136.2 499.7,78.6 500.0,133.4 500.4,74.4 500.7,136.4 501.4,75.6 502.0,134.2 502.7,76.1 503.2,136.3 503.8,79.4 504.2,137.5 504.6,78.7 504.9,134.0 505.2,79.5 505.7,133.6 506.0,76.1 506.4,134.4 506.7,75.1 507.1,136.8 507.5,78.9 507.8,133.1 508.3,79.2 508.6,132.2 508.9,77.2 509.3,137.9 509.7,78.8 510.6,138.4 513.1,140.9 515.5,141.7 516.0,106.8 516.4,71.1 517.2,69.5 519.7,71.1 521.0,73.6 521.9,78.6 522.7,72.8 523.9,70.0 525.5,71.1 526.3,69.5 528.0,70.3 529.3,76.1 530.5,77.8 531.0,83.6 531.7,111.8 532.7,138.4 535.0,139.2 535.3,111.8 535.6,78.6 536.3,73.6" fill="none" stroke="#ffff00" stroke-width="0.7" stroke-linejoin="round"/><rect x="543" y="56.8" width="219" height="104.5" fill="#22222c"/><text x="543.2" y="51.40" font-size="5.8" fill="#f6f6f6" textLength="72" lengthAdjust="spacingAndGlyphs">HO2S BANK 1 SENSOR 2(mV)</text><circle cx="758" cy="50.60" r="2.55" fill="none" stroke="#fff" stroke-width="2.5"/><text transform="translate(759.30 62.70) scale(0.92 1)" font-size="5.92" fill="#ececec" text-anchor="end">Current: 573</text><text transform="translate(722.00 62.70) scale(0.92 1)" font-size="5.92" fill="#ececec" text-anchor="end">Max: 859</text><text transform="translate(692.59 62.70) scale(0.92 1)" font-size="5.92" fill="#ececec" text-anchor="end">Min: 26</text><path d="M558.50 67.40V144.20M558.10 143.80H758.80" stroke="#cfcfcf" stroke-width="0.8" fill="none"/><text transform="translate(554.20 69.60) scale(0.92 1)" font-size="5.65" fill="#ececec" text-anchor="end">859</text><text transform="translate(554.20 92.61) scale(0.92 1)" font-size="5.65" fill="#ececec" text-anchor="end">600</text><text transform="translate(554.20 110.38) scale(0.92 1)" font-size="5.65" fill="#ececec" text-anchor="end">400</text><text transform="translate(554.20 128.14) scale(0.92 1)" font-size="5.65" fill="#ececec" text-anchor="end">200</text><text transform="translate(554.20 143.60) scale(0.92 1)" font-size="5.65" fill="#ececec" text-anchor="end">26</text><text transform="translate(560.45 148.30) rotate(-90) scale(0.92 1)" font-size="5.65" fill="#ececec" text-anchor="end">0</text><text transform="translate(570.44 148.30) rotate(-90) scale(0.92 1)" font-size="5.65" fill="#ececec" text-anchor="end">100</text><text transform="translate(580.44 148.30) rotate(-90) scale(0.92 1)" font-size="5.65" fill="#ececec" text-anchor="end">200</text><text transform="translate(590.43 148.30) rotate(-90) scale(0.92 1)" font-size="5.65" fill="#ececec" text-anchor="end">300</text><text transform="translate(600.43 148.30) rotate(-90) scale(0.92 1)" font-size="5.65" fill="#ececec" text-anchor="end">400</text><text transform="translate(610.42 148.30) rotate(-90) scale(0.92 1)" font-size="5.65" fill="#ececec" text-anchor="end">500</text><text transform="translate(620.42 148.30) rotate(-90) scale(0.92 1)" font-size="5.65" fill="#ececec" text-anchor="end">600</text><text transform="translate(630.41 148.30) rotate(-90) scale(0.92 1)" font-size="5.65" fill="#ececec" text-anchor="end">700</text><text transform="translate(640.41 148.30) rotate(-90) scale(0.92 1)" font-size="5.65" fill="#ececec" text-anchor="end">800</text><text transform="translate(650.40 148.30) rotate(-90) scale(0.92 1)" font-size="5.65" fill="#ececec" text-anchor="end">900</text><text transform="translate(660.40 148.30) rotate(-90) scale(0.92 1)" font-size="5.65" fill="#ececec" text-anchor="end">1000</text><text transform="translate(670.39 148.30) rotate(-90) scale(0.92 1)" font-size="5.65" fill="#ececec" text-anchor="end">1100</text><text transform="translate(680.39 148.30) rotate(-90) scale(0.92 1)" font-size="5.65" fill="#ececec" text-anchor="end">1200</text><text transform="translate(690.38 148.30) rotate(-90) scale(0.92 1)" font-size="5.65" fill="#ececec" text-anchor="end">1300</text><text transform="translate(700.38 148.30) rotate(-90) scale(0.92 1)" font-size="5.65" fill="#ececec" text-anchor="end">1400</text><text transform="translate(710.37 148.30) rotate(-90) scale(0.92 1)" font-size="5.65" fill="#ececec" text-anchor="end">1500</text><text transform="translate(720.37 148.30) rotate(-90) scale(0.92 1)" font-size="5.65" fill="#ececec" text-anchor="end">1600</text><text transform="translate(730.36 148.30) rotate(-90) scale(0.92 1)" font-size="5.65" fill="#ececec" text-anchor="end">1700</text><text transform="translate(740.36 148.30) rotate(-90) scale(0.92 1)" font-size="5.65" fill="#ececec" text-anchor="end">1800</text><text transform="translate(750.35 148.30) rotate(-90) scale(0.92 1)" font-size="5.65" fill="#ececec" text-anchor="end">1900</text><text transform="translate(760.25 148.30) rotate(-90) scale(0.92 1)" font-size="5.65" fill="#ececec" text-anchor="end">1999</text><path d="M555.90 68.00H558.50M555.90 91.01H558.50M555.90 108.78H558.50M555.90 126.54H558.50M555.90 142.00H558.50M558.50 143.80V146.20M568.49 143.80V146.20M578.49 143.80V146.20M588.48 143.80V146.20M598.48 143.80V146.20M608.47 143.80V146.20M618.47 143.80V146.20M628.46 143.80V146.20M638.46 143.80V146.20M648.45 143.80V146.20M658.45 143.80V146.20M668.44 143.80V146.20M678.44 143.80V146.20M688.43 143.80V146.20M698.43 143.80V146.20M708.42 143.80V146.20M718.42 143.80V146.20M728.41 143.80V146.20M738.41 143.80V146.20M748.40 143.80V146.20M758.30 143.80V146.20" stroke="#cfcfcf" stroke-width="0.7" fill="none"/><path d="M683.34 67.60V142.60" stroke="#5cb4ba" stroke-width="0.8" opacity="1"/><path d="M758.30 67.60V142.60" stroke="#0f8a14" stroke-width="0.8"/><polyline points="558.4,115.1 559.6,123.4 561.3,129.6 562.3,125.9 562.9,110.2 563.4,90.2 564.3,86.6 565.4,90.2 567.6,95.5 568.6,92.7 569.2,82.7 570.4,81.9 571.6,83.2 572.9,82.7 574.6,84.4 577.1,83.9 578.2,78.9 579.9,79.4 582.0,78.3 583.4,80.3 584.5,84.9 585.5,81.9 587.0,79.4 589.5,79.1 591.2,78.3 592.8,78.6 594.5,77.3 596.2,76.6 597.8,74.4 599.5,73.6 600.8,71.1 601.5,67.8 602.5,71.1 603.6,72.8 606.1,74.4 608.6,75.3 611.1,76.1 614.4,76.6 617.8,77.4 620.2,78.3 621.4,80.3 622.7,84.4 623.6,93.9 624.1,83.6 624.6,83.4 625.2,82.2 625.8,83.0 626.3,82.5 626.9,83.2 627.4,82.7 628.0,83.2 628.5,82.7 629.1,83.3 629.7,83.5 630.2,83.6 630.8,83.1 631.3,83.1 631.9,82.7 632.4,83.6 633.0,84.3 633.5,84.9 634.1,84.9 634.7,85.6 635.4,88.6 636.0,85.2 636.6,84.9 637.1,84.6 637.7,84.4 638.2,84.9 638.8,85.5 639.3,85.2 640.3,87.2 641.0,84.4 641.6,84.6 642.1,83.9 642.7,83.6 643.2,83.4 643.8,83.1 644.3,83.2 644.9,82.9 645.4,83.0 646.0,83.6 646.7,80.3 647.3,86.1 647.7,90.2 648.3,85.2 648.9,84.7 649.5,84.0 650.1,83.6 650.7,83.2 651.3,83.4 651.8,82.7 652.0,82.2 652.6,82.5 653.2,82.8 653.9,82.7 654.5,83.2 655.1,82.9 655.7,83.4 656.4,83.4 657.0,83.9 657.5,84.0 658.1,84.6 658.6,84.3 659.2,83.9 659.8,84.7 660.3,84.4 660.9,84.7 661.4,84.5 662.0,84.6 662.5,84.5 663.1,84.4 663.6,84.1 664.3,83.8 664.9,84.3 665.5,84.2 666.1,83.6 667.0,82.2 667.8,83.9 668.4,83.8 669.0,84.7 669.6,84.9 670.3,84.9 670.9,86.5 671.6,88.2 672.2,87.4 672.8,86.6 673.4,86.6 674.0,87.2 674.6,86.8 675.3,86.9 675.9,87.3 676.5,86.9 677.1,87.5 677.7,87.2 678.3,87.5 678.9,87.0 679.4,86.9 680.0,87.1 680.5,87.5 681.1,87.2 681.7,89.0 682.2,90.2 683.2,94.4 684.4,100.2 685.6,106.8 686.9,105.2 688.2,110.2 689.4,118.5 690.5,126.8 691.2,129.3 691.9,123.4 692.5,106.8 693.0,86.9 693.5,83.2 694.5,84.4 695.5,89.4 696.9,91.9 698.2,92.7 700.2,90.2 702.7,88.2 705.2,86.6 706.8,85.2 708.1,81.9 709.3,77.8 710.5,76.6 711.5,79.4 712.6,78.3 713.8,74.9 715.1,71.6 716.5,74.4 717.6,76.9 719.3,81.1 720.9,82.7 722.6,81.9 724.3,83.2 725.9,86.6 727.1,81.9 728.1,81.1 729.2,84.4 730.9,87.7 732.1,82.7 733.1,80.3 735.1,80.8 736.7,81.9 737.4,83.6 737.7,135.1 737.9,141.7 738.4,134.7 740.9,134.2 743.4,133.4 745.9,133.7 747.2,132.6 748.0,123.4 748.7,98.5 749.3,76.9 750.0,69.5 751.3,68.3 753.3,68.6 755.3,70.0 757.0,71.1 758.3,72.8" fill="none" stroke="#ffff00" stroke-width="0.62" stroke-linejoin="round"/><rect x="765" y="56.8" width="219" height="104.5" fill="#22222c"/><text x="765.2" y="51.40" font-size="5.8" fill="#f6f6f6" textLength="72" lengthAdjust="spacingAndGlyphs">HO2S BANK 2 SENSOR 1(mV)</text><circle cx="980" cy="50.60" r="2.55" fill="none" stroke="#fff" stroke-width="2.5"/><text transform="translate(981.30 62.70) scale(0.92 1)" font-size="5.92" fill="#ececec" text-anchor="end">Current: 868</text><text transform="translate(944.00 62.70) scale(0.92 1)" font-size="5.92" fill="#ececec" text-anchor="end">Max: 903</text><text transform="translate(914.59 62.70) scale(0.92 1)" font-size="5.92" fill="#ececec" text-anchor="end">Min: 26</text><path d="M780.40 67.40V144.20M780.00 143.80H980.80" stroke="#cfcfcf" stroke-width="0.8" fill="none"/><text transform="translate(776.10 69.60) scale(0.92 1)" font-size="5.65" fill="#ececec" text-anchor="end">903</text><text transform="translate(776.10 78.29) scale(0.92 1)" font-size="5.65" fill="#ececec" text-anchor="end">800</text><text transform="translate(776.10 95.17) scale(0.92 1)" font-size="5.65" fill="#ececec" text-anchor="end">600</text><text transform="translate(776.10 112.04) scale(0.92 1)" font-size="5.65" fill="#ececec" text-anchor="end">400</text><text transform="translate(776.10 128.92) scale(0.92 1)" font-size="5.65" fill="#ececec" text-anchor="end">200</text><text transform="translate(776.10 143.60) scale(0.92 1)" font-size="5.65" fill="#ececec" text-anchor="end">26</text><text transform="translate(782.35 148.30) rotate(-90) scale(0.92 1)" font-size="5.65" fill="#ececec" text-anchor="end">0</text><text transform="translate(792.35 148.30) rotate(-90) scale(0.92 1)" font-size="5.65" fill="#ececec" text-anchor="end">100</text><text transform="translate(802.35 148.30) rotate(-90) scale(0.92 1)" font-size="5.65" fill="#ececec" text-anchor="end">200</text><text transform="translate(812.35 148.30) rotate(-90) scale(0.92 1)" font-size="5.65" fill="#ececec" text-anchor="end">300</text><text transform="translate(822.35 148.30) rotate(-90) scale(0.92 1)" font-size="5.65" fill="#ececec" text-anchor="end">400</text><text transform="translate(832.35 148.30) rotate(-90) scale(0.92 1)" font-size="5.65" fill="#ececec" text-anchor="end">500</text><text transform="translate(842.35 148.30) rotate(-90) scale(0.92 1)" font-size="5.65" fill="#ececec" text-anchor="end">600</text><text transform="translate(852.35 148.30) rotate(-90) scale(0.92 1)" font-size="5.65" fill="#ececec" text-anchor="end">700</text><text transform="translate(862.35 148.30) rotate(-90) scale(0.92 1)" font-size="5.65" fill="#ececec" text-anchor="end">800</text><text transform="translate(872.35 148.30) rotate(-90) scale(0.92 1)" font-size="5.65" fill="#ececec" text-anchor="end">900</text><text transform="translate(882.35 148.30) rotate(-90) scale(0.92 1)" font-size="5.65" fill="#ececec" text-anchor="end">1000</text><text transform="translate(892.35 148.30) rotate(-90) scale(0.92 1)" font-size="5.65" fill="#ececec" text-anchor="end">1100</text><text transform="translate(902.35 148.30) rotate(-90) scale(0.92 1)" font-size="5.65" fill="#ececec" text-anchor="end">1200</text><text transform="translate(912.35 148.30) rotate(-90) scale(0.92 1)" font-size="5.65" fill="#ececec" text-anchor="end">1300</text><text transform="translate(922.35 148.30) rotate(-90) scale(0.92 1)" font-size="5.65" fill="#ececec" text-anchor="end">1400</text><text transform="translate(932.35 148.30) rotate(-90) scale(0.92 1)" font-size="5.65" fill="#ececec" text-anchor="end">1500</text><text transform="translate(942.35 148.30) rotate(-90) scale(0.92 1)" font-size="5.65" fill="#ececec" text-anchor="end">1600</text><text transform="translate(952.35 148.30) rotate(-90) scale(0.92 1)" font-size="5.65" fill="#ececec" text-anchor="end">1700</text><text transform="translate(962.35 148.30) rotate(-90) scale(0.92 1)" font-size="5.65" fill="#ececec" text-anchor="end">1800</text><text transform="translate(972.35 148.30) rotate(-90) scale(0.92 1)" font-size="5.65" fill="#ececec" text-anchor="end">1900</text><text transform="translate(982.25 148.30) rotate(-90) scale(0.92 1)" font-size="5.65" fill="#ececec" text-anchor="end">1999</text><path d="M777.80 68.00H780.40M777.80 76.69H780.40M777.80 93.57H780.40M777.80 110.44H780.40M777.80 127.32H780.40M777.80 142.00H780.40M780.40 143.80V146.20M790.40 143.80V146.20M800.40 143.80V146.20M810.40 143.80V146.20M820.40 143.80V146.20M830.40 143.80V146.20M840.40 143.80V146.20M850.40 143.80V146.20M860.40 143.80V146.20M870.40 143.80V146.20M880.40 143.80V146.20M890.40 143.80V146.20M900.40 143.80V146.20M910.40 143.80V146.20M920.40 143.80V146.20M930.40 143.80V146.20M940.40 143.80V146.20M950.40 143.80V146.20M960.40 143.80V146.20M970.40 143.80V146.20M980.30 143.80V146.20" stroke="#cfcfcf" stroke-width="0.7" fill="none"/><path d="M905.30 67.60V142.60" stroke="#5cb4ba" stroke-width="0.8" opacity="0.9"/><path d="M980.30 67.60V142.60" stroke="#0f8a14" stroke-width="0.8"/><polygon points="834.8,86.8 835.7,85.9 836.4,87.8 837.2,86.2 838.1,82.9 839.0,85.4 839.8,82.3 840.6,81.4 841.5,81.2 842.2,78.4 843.0,79.6 843.7,79.3 844.4,79.9 844.7,137.4 844.0,136.4 843.4,133.1 842.6,131.5 841.9,131.4 841.0,132.7 840.1,131.8 839.4,134.3 838.6,136.4 837.6,131.7 836.8,135.0 836.1,132.8 835.3,131.0" fill="#ffff00"/><path d="M836.59 112.2V140.8M841.65 116.5V140.8M840.80 79.8V92.0M840.02 119.2V140.8" stroke="#4a4a14" stroke-width="0.4" opacity="0.85" fill="none"/><polygon points="844.7,75.6 845.4,76.1 846.2,77.3 846.8,79.7 847.6,79.7 848.2,76.1 849.0,78.1 849.7,78.2 850.3,79.4 850.9,78.3 851.5,77.1 852.3,76.9 853.1,76.0 853.8,75.6 854.5,77.9 855.0,76.9 855.7,77.4 856.4,77.5 857.0,79.9 857.6,78.3 858.4,77.4 859.0,77.2 859.5,80.0 860.3,76.7 860.8,78.2 861.4,75.8 862.1,76.9 862.8,77.9 863.5,76.7 864.1,79.1 864.6,79.1 865.2,78.6 865.9,79.7 866.7,75.8 867.4,79.9 868.0,78.1 868.8,76.4 869.5,79.3 870.0,78.5 870.5,79.2 871.2,79.2 872.0,77.1 872.7,77.4 873.4,78.6 874.0,79.2 874.7,78.2 874.4,123.8 873.8,132.3 873.1,124.1 872.3,129.6 871.6,125.8 870.9,131.3 870.2,136.5 869.7,128.0 869.2,134.4 868.4,134.0 867.7,132.7 867.0,135.8 866.3,127.6 865.7,133.9 865.0,136.5 864.4,137.1 863.8,131.4 863.0,129.6 862.4,134.1 861.7,126.9 861.1,130.9 860.5,130.3 859.9,130.1 859.2,120.7 858.7,128.8 858.0,129.1 857.3,124.2 856.6,125.8 856.0,119.3 855.4,124.8 854.8,120.5 854.1,124.7 853.4,125.8 852.7,128.8 851.9,126.7 851.2,128.6 850.6,124.1 850.0,121.2 849.4,129.8 848.6,126.3 847.9,121.7 847.2,124.1 846.6,126.1 845.8,124.4 845.1,127.1" fill="#ffff00"/><path d="M870.71 116.3V140.8M851.80 79.8V113.5M865.21 117.6V140.8M859.75 79.8V105.7M849.44 121.4V140.8M864.65 79.8V93.4M854.88 119.0V140.8M866.89 79.8V102.0M871.52 79.8V96.6M862.29 117.5V140.8M861.40 79.8V109.5M870.98 121.6V140.8M858.85 117.7V140.8" stroke="#4a4a14" stroke-width="0.4" opacity="0.85" fill="none"/><polygon points="874.0,78.4 874.7,77.9 875.5,79.6 876.2,79.7 877.0,75.5 877.6,77.8 878.3,76.3 878.9,75.7 879.5,78.3 880.3,75.7 881.1,77.4 881.6,79.2 882.2,75.3 882.9,77.2 883.7,75.8 884.3,79.9 884.9,79.2 885.8,80.4 886.4,76.6 887.1,78.6 887.9,77.2 888.6,76.8 889.2,76.6 889.7,80.3 890.5,76.4 891.0,80.7 891.6,75.3 892.3,80.3 893.1,80.7 893.8,79.2 894.4,79.9 895.0,79.5 895.5,75.5 896.1,75.4 896.8,79.2 897.5,79.9 898.3,76.5 899.0,79.1 899.7,78.6 900.3,80.2 901.0,80.1 901.6,80.0 902.4,78.3 903.1,77.9 903.7,79.5 904.2,74.8 904.5,143.2 903.9,134.6 903.3,138.5 902.8,140.1 902.0,132.0 901.4,132.4 900.7,134.6 900.0,134.1 899.4,137.0 898.6,135.5 897.9,135.9 897.1,133.2 896.5,128.1 895.8,132.9 895.2,124.2 894.7,127.6 894.1,129.5 893.4,131.6 892.7,131.2 892.0,131.4 891.4,133.5 890.8,130.7 890.1,131.4 889.4,129.6 888.9,124.6 888.3,131.0 887.5,131.3 886.7,129.7 886.1,133.4 885.3,129.3 884.7,129.4 884.1,131.4 883.3,124.5 882.5,124.8 881.9,127.8 881.3,129.5 880.7,126.4 879.9,128.0 879.3,122.5 878.6,129.4 878.0,128.2 877.3,123.9 876.6,130.9 875.9,124.3 875.1,128.5 874.3,128.2" fill="#ffff00"/><path d="M892.98 122.5V140.8M886.04 120.8V140.8M901.53 119.5V140.8M903.27 79.8V102.0M902.20 112.2V140.8M876.64 126.5V140.8M885.86 79.8V110.0M902.27 79.8V103.3M894.07 79.8V102.4M878.72 79.8V97.2M876.88 79.8V95.0M878.01 79.8V102.5M883.89 117.1V140.8" stroke="#4a4a14" stroke-width="0.4" opacity="0.85" fill="none"/><polygon points="937.5,80.5 938.3,79.8 939.1,79.5 940.0,80.6 940.8,76.1 941.5,80.0 942.3,80.2 943.0,76.1 943.7,78.2 944.4,75.3 945.1,79.6 945.7,79.2 946.6,76.8 947.1,136.7 946.3,133.6 945.5,136.4 944.8,137.5 944.0,133.7 943.4,132.7 942.6,132.6 941.9,135.5 941.2,137.5 940.4,134.0 939.6,136.3 938.8,135.0 937.9,136.1" fill="#ffff00"/><path d="M940.05 79.8V99.1M944.35 79.8V103.8M944.89 118.0V140.8M945.20 113.3V140.8" stroke="#4a4a14" stroke-width="0.4" opacity="0.85" fill="none"/><polygon points="950.1,74.9 950.7,76.1 951.6,78.2 952.3,79.6 953.2,78.0 953.9,80.5 954.4,134.1 953.5,134.8 952.8,137.0 952.0,136.4 951.1,134.8 950.4,135.3" fill="#ffff00"/><path d="M950.89 79.8V112.9" stroke="#4a4a14" stroke-width="0.4" opacity="0.85" fill="none"/><polyline points="780.4,78.6 780.9,123.4 781.6,135.1 781.8,76.6 783.1,137.7 784.0,74.9 785.0,135.3 785.8,72.9 786.9,140.1 788.6,139.2 789.3,106.8 789.6,69.2 790.6,131.9 791.3,71.1 792.3,135.2 793.4,69.7 794.1,137.0 795.2,70.9 796.2,138.2 797.2,71.3 798.1,135.6 798.2,72.9 798.7,134.9 799.5,75.2 800.1,136.3 800.7,71.8 801.2,137.7 801.8,71.2 802.3,131.2 802.9,75.0 803.7,133.7 804.3,72.7 804.9,137.4 805.5,72.4 806.1,137.4 806.8,77.2 807.4,135.5 808.2,75.2 809.0,132.3 809.9,70.8 810.5,131.1 811.3,76.0 812.2,137.6 813.0,74.8 813.9,137.1 814.5,78.4 814.8,69.6 815.4,137.4 816.0,73.3 817.0,136.1 817.6,71.3 818.2,137.8 819.1,69.9 819.8,139.6 820.6,70.3 821.5,139.1 822.5,72.1 823.2,138.5 824.5,139.2 826.5,138.4 826.8,76.2 827.4,135.7 828.0,77.1 828.7,137.0 829.5,72.7 830.2,135.9 830.9,77.5 831.4,139.0 831.9,75.7 832.6,135.4 833.3,75.1 833.9,137.8 834.4,74.5 834.8,86.8 835.3,131.0 835.7,85.9 836.1,132.8 836.4,87.8 836.8,135.0 837.2,86.2 837.6,131.7 838.1,82.9 838.6,136.4 839.0,85.4 839.4,134.3 839.8,82.3 840.1,131.8 840.6,81.4 841.0,132.7 841.5,81.2 841.9,131.4 842.2,78.4 842.6,131.5 843.0,79.6 843.4,133.1 843.7,79.3 844.0,136.4 844.4,79.9 844.7,137.4 844.7,75.6 845.1,127.1 845.4,76.1 845.8,124.4 846.2,77.3 846.6,126.1 846.8,79.7 847.2,124.1 847.6,79.7 847.9,121.7 848.2,76.1 848.6,126.3 849.0,78.1 849.4,129.8 849.7,78.2 850.0,121.2 850.3,79.4 850.6,124.1 850.9,78.3 851.2,128.6 851.5,77.1 851.9,126.7 852.3,76.9 852.7,128.8 853.1,76.0 853.4,125.8 853.8,75.6 854.1,124.7 854.5,77.9 854.8,120.5 855.0,76.9 855.4,124.8 855.7,77.4 856.0,119.3 856.4,77.5 856.6,125.8 857.0,79.9 857.3,124.2 857.6,78.3 858.0,129.1 858.4,77.4 858.7,128.8 859.0,77.2 859.2,120.7 859.5,80.0 859.9,130.1 860.3,76.7 860.5,130.3 860.8,78.2 861.1,130.9 861.4,75.8 861.7,126.9 862.1,76.9 862.4,134.1 862.8,77.9 863.0,129.6 863.5,76.7 863.8,131.4 864.1,79.1 864.4,137.1 864.6,79.1 865.0,136.5 865.2,78.6 865.7,133.9 865.9,79.7 866.3,127.6 866.7,75.8 867.0,135.8 867.4,79.9 867.7,132.7 868.0,78.1 868.4,134.0 868.8,76.4 869.2,134.4 869.5,79.3 869.7,128.0 870.0,78.5 870.2,136.5 870.5,79.2 870.9,131.3 871.2,79.2 871.6,125.8 872.0,77.1 872.3,129.6 872.7,77.4 873.1,124.1 873.4,78.6 873.8,132.3 874.0,79.2 874.4,123.8 874.7,78.2 874.0,78.4 874.3,128.2 874.7,77.9 875.1,128.5 875.5,79.6 875.9,124.3 876.2,79.7 876.6,130.9 877.0,75.5 877.3,123.9 877.6,77.8 878.0,128.2 878.3,76.3 878.6,129.4 878.9,75.7 879.3,122.5 879.5,78.3 879.9,128.0 880.3,75.7 880.7,126.4 881.1,77.4 881.3,129.5 881.6,79.2 881.9,127.8 882.2,75.3 882.5,124.8 882.9,77.2 883.3,124.5 883.7,75.8 884.1,131.4 884.3,79.9 884.7,129.4 884.9,79.2 885.3,129.3 885.8,80.4 886.1,133.4 886.4,76.6 886.7,129.7 887.1,78.6 887.5,131.3 887.9,77.2 888.3,131.0 888.6,76.8 888.9,124.6 889.2,76.6 889.4,129.6 889.7,80.3 890.1,131.4 890.5,76.4 890.8,130.7 891.0,80.7 891.4,133.5 891.6,75.3 892.0,131.4 892.3,80.3 892.7,131.2 893.1,80.7 893.4,131.6 893.8,79.2 894.1,129.5 894.4,79.9 894.7,127.6 895.0,79.5 895.2,124.2 895.5,75.5 895.8,132.9 896.1,75.4 896.5,128.1 896.8,79.2 897.1,133.2 897.5,79.9 897.9,135.9 898.3,76.5 898.6,135.5 899.0,79.1 899.4,137.0 899.7,78.6 900.0,134.1 900.3,80.2 900.7,134.6 901.0,80.1 901.4,132.4 901.6,80.0 902.0,132.0 902.4,78.3 902.8,140.1 903.1,77.9 903.3,138.5 903.7,79.5 903.9,134.6 904.2,74.8 904.5,143.2 905.2,71.5 906.1,137.3 906.7,74.5 907.3,137.2 907.8,71.5 908.4,140.0 908.9,73.9 909.4,139.3 909.9,72.8 910.7,136.5 911.4,72.5 912.1,138.9 912.6,76.0 913.2,139.5 913.7,70.9 914.3,136.7 914.9,71.2 915.4,139.8 916.1,73.6 916.9,139.2 918.5,139.2 919.2,70.3 920.5,72.8 922.2,76.9 923.2,81.9 923.8,136.7 924.5,78.2 925.0,136.1 925.7,72.8 926.3,138.0 927.0,72.8 927.6,136.9 928.3,73.0 929.1,72.0 930.1,138.4 931.0,98.5 931.6,136.7 932.5,139.2 933.5,139.2 934.1,68.6 935.8,67.8 937.1,73.6 937.5,80.5 937.9,136.1 938.3,79.8 938.8,135.0 939.1,79.5 939.6,136.3 940.0,80.6 940.4,134.0 940.8,76.1 941.2,137.5 941.5,80.0 941.9,135.5 942.3,80.2 942.6,132.6 943.0,76.1 943.4,132.7 943.7,78.2 944.0,133.7 944.4,75.3 944.8,137.5 945.1,79.6 945.5,136.4 945.7,79.2 946.3,133.6 946.6,76.8 947.1,136.7 947.4,80.2 948.3,137.8 949.2,75.7 950.1,74.9 950.4,135.3 950.7,76.1 951.1,134.8 951.6,78.2 952.0,136.4 952.3,79.6 952.8,137.0 953.2,78.0 953.5,134.8 953.9,80.5 954.4,134.1 955.1,138.4 957.1,140.9 959.5,141.7 960.0,106.8 960.7,71.1 961.7,69.0 963.7,71.1 965.0,72.8 966.2,78.6 967.0,72.8 968.4,70.6 970.0,72.0 971.2,70.0 972.8,71.1 974.0,73.6 975.0,81.9 975.7,111.8 976.7,138.4 979.0,139.2 979.3,111.8 979.6,83.6 980.3,75.3" fill="none" stroke="#ffff00" stroke-width="0.7" stroke-linejoin="round"/><rect x="321" y="174.2" width="219" height="104.5" fill="#22222c"/><text x="321.2" y="168.80" font-size="5.8" fill="#f6f6f6" textLength="72" lengthAdjust="spacingAndGlyphs">HO2S BANK 2 SENSOR 2(mV)</text><circle cx="536" cy="168.00" r="2.55" fill="none" stroke="#fff" stroke-width="2.5"/><text transform="translate(537.30 180.10) scale(0.92 1)" font-size="5.92" fill="#ececec" text-anchor="end">Current: 326</text><text transform="translate(500.00 180.10) scale(0.92 1)" font-size="5.92" fill="#ececec" text-anchor="end">Max: 868</text><text transform="translate(470.59 180.10) scale(0.92 1)" font-size="5.92" fill="#ececec" text-anchor="end">Min: 13</text><path d="M336.40 184.80V261.60M336.00 261.20H536.80" stroke="#cfcfcf" stroke-width="0.8" fill="none"/><text transform="translate(332.10 187.00) scale(0.92 1)" font-size="5.65" fill="#ececec" text-anchor="end">868</text><text transform="translate(332.10 192.89) scale(0.92 1)" font-size="5.65" fill="#ececec" text-anchor="end">800</text><text transform="translate(332.10 210.20) scale(0.92 1)" font-size="5.65" fill="#ececec" text-anchor="end">600</text><text transform="translate(332.10 227.51) scale(0.92 1)" font-size="5.65" fill="#ececec" text-anchor="end">400</text><text transform="translate(332.10 244.82) scale(0.92 1)" font-size="5.65" fill="#ececec" text-anchor="end">200</text><text transform="translate(332.10 261.00) scale(0.92 1)" font-size="5.65" fill="#ececec" text-anchor="end">13</text><text transform="translate(338.35 265.70) rotate(-90) scale(0.92 1)" font-size="5.65" fill="#ececec" text-anchor="end">0</text><text transform="translate(348.35 265.70) rotate(-90) scale(0.92 1)" font-size="5.65" fill="#ececec" text-anchor="end">100</text><text transform="translate(358.35 265.70) rotate(-90) scale(0.92 1)" font-size="5.65" fill="#ececec" text-anchor="end">200</text><text transform="translate(368.35 265.70) rotate(-90) scale(0.92 1)" font-size="5.65" fill="#ececec" text-anchor="end">300</text><text transform="translate(378.35 265.70) rotate(-90) scale(0.92 1)" font-size="5.65" fill="#ececec" text-anchor="end">400</text><text transform="translate(388.35 265.70) rotate(-90) scale(0.92 1)" font-size="5.65" fill="#ececec" text-anchor="end">500</text><text transform="translate(398.35 265.70) rotate(-90) scale(0.92 1)" font-size="5.65" fill="#ececec" text-anchor="end">600</text><text transform="translate(408.35 265.70) rotate(-90) scale(0.92 1)" font-size="5.65" fill="#ececec" text-anchor="end">700</text><text transform="translate(418.35 265.70) rotate(-90) scale(0.92 1)" font-size="5.65" fill="#ececec" text-anchor="end">800</text><text transform="translate(428.35 265.70) rotate(-90) scale(0.92 1)" font-size="5.65" fill="#ececec" text-anchor="end">900</text><text transform="translate(438.35 265.70) rotate(-90) scale(0.92 1)" font-size="5.65" fill="#ececec" text-anchor="end">1000</text><text transform="translate(448.35 265.70) rotate(-90) scale(0.92 1)" font-size="5.65" fill="#ececec" text-anchor="end">1100</text><text transform="translate(458.35 265.70) rotate(-90) scale(0.92 1)" font-size="5.65" fill="#ececec" text-anchor="end">1200</text><text transform="translate(468.35 265.70) rotate(-90) scale(0.92 1)" font-size="5.65" fill="#ececec" text-anchor="end">1300</text><text transform="translate(478.35 265.70) rotate(-90) scale(0.92 1)" font-size="5.65" fill="#ececec" text-anchor="end">1400</text><text transform="translate(488.35 265.70) rotate(-90) scale(0.92 1)" font-size="5.65" fill="#ececec" text-anchor="end">1500</text><text transform="translate(498.35 265.70) rotate(-90) scale(0.92 1)" font-size="5.65" fill="#ececec" text-anchor="end">1600</text><text transform="translate(508.35 265.70) rotate(-90) scale(0.92 1)" font-size="5.65" fill="#ececec" text-anchor="end">1700</text><text transform="translate(518.35 265.70) rotate(-90) scale(0.92 1)" font-size="5.65" fill="#ececec" text-anchor="end">1800</text><text transform="translate(528.35 265.70) rotate(-90) scale(0.92 1)" font-size="5.65" fill="#ececec" text-anchor="end">1900</text><text transform="translate(538.25 265.70) rotate(-90) scale(0.92 1)" font-size="5.65" fill="#ececec" text-anchor="end">1999</text><path d="M333.80 185.40H336.40M333.80 191.29H336.40M333.80 208.60H336.40M333.80 225.91H336.40M333.80 243.22H336.40M333.80 259.40H336.40M336.40 261.20V263.60M346.40 261.20V263.60M356.40 261.20V263.60M366.40 261.20V263.60M376.40 261.20V263.60M386.40 261.20V263.60M396.40 261.20V263.60M406.40 261.20V263.60M416.40 261.20V263.60M426.40 261.20V263.60M436.40 261.20V263.60M446.40 261.20V263.60M456.40 261.20V263.60M466.40 261.20V263.60M476.40 261.20V263.60M486.40 261.20V263.60M496.40 261.20V263.60M506.40 261.20V263.60M516.40 261.20V263.60M526.40 261.20V263.60M536.30 261.20V263.60" stroke="#cfcfcf" stroke-width="0.7" fill="none"/><path d="M461.30 185.00V260.00" stroke="#5cb4ba" stroke-width="0.8" opacity="0.6"/><path d="M536.30 185.00V260.00" stroke="#0f8a14" stroke-width="0.8"/><polyline points="336.4,250.7 337.6,252.9 338.9,253.4 340.6,249.6 341.3,240.4 341.8,233.0 342.3,235.5 342.6,247.1 343.4,251.2 344.6,251.7 345.9,249.6 346.2,223.8 346.6,200.6 347.2,197.3 348.4,199.7 349.6,201.4 350.6,198.9 351.6,204.7 352.6,198.9 354.2,197.3 355.9,194.8 356.7,197.3 358.4,198.9 360.0,200.6 361.4,202.2 362.2,207.2 362.7,215.5 363.4,207.2 364.2,200.6 365.9,198.9 367.5,200.6 369.2,203.9 370.5,201.4 371.3,206.4 372.2,201.4 373.3,198.1 375.0,199.7 376.6,197.3 377.8,198.9 378.8,190.6 379.5,188.1 380.8,189.0 382.5,192.3 384.1,193.9 386.6,194.8 388.8,195.3 389.4,199.7 390.1,195.3 392.4,195.6 394.9,195.9 397.4,196.4 398.7,198.9 399.9,205.6 400.7,210.5 401.6,227.5 402.1,207.2 402.7,201.4 403.4,201.6 404.1,203.1 404.6,202.6 405.2,203.9 405.7,204.7 406.3,203.0 406.8,201.9 407.4,202.2 407.9,203.1 408.5,205.5 409.0,205.6 409.9,208.1 410.4,207.2 411.0,205.4 411.5,203.1 412.1,202.9 412.6,204.3 413.2,204.7 413.7,203.0 414.3,201.7 414.9,201.4 415.4,200.8 416.0,201.4 416.5,202.6 417.0,203.9 417.5,203.8 418.0,204.0 418.5,204.1 419.0,203.6 419.6,202.4 420.1,202.4 420.7,202.6 421.2,203.6 421.8,204.6 422.3,204.7 422.9,205.1 423.4,204.6 424.0,203.1 424.8,207.2 425.3,217.5 426.0,207.2 426.6,204.1 427.3,203.1 427.9,203.1 428.4,203.0 429.0,202.2 429.5,202.4 430.0,202.6 430.6,202.5 431.1,203.9 431.7,204.7 432.2,203.3 432.8,205.1 433.3,203.6 433.9,205.2 434.4,205.0 435.0,205.6 435.8,208.9 436.6,203.9 437.2,203.1 437.8,204.4 438.3,203.1 438.9,203.8 439.4,205.2 440.0,204.7 440.5,205.4 441.1,204.2 441.6,203.9 442.3,205.3 443.0,207.2 443.6,211.4 444.1,208.3 444.6,204.7 445.2,203.3 445.8,202.2 446.3,201.8 446.9,202.6 447.4,203.6 448.0,204.0 448.5,201.7 449.1,202.6 449.7,202.1 450.2,204.3 450.8,204.7 451.3,203.9 451.9,204.3 452.4,203.9 453.0,204.4 453.5,204.6 454.1,205.6 454.7,206.0 455.2,203.9 455.7,205.6 456.2,208.9 456.8,206.6 457.4,204.7 458.0,203.5 458.6,203.9 459.1,205.9 459.6,207.2 460.4,213.9 461.2,228.8 461.6,217.2 462.4,213.9 463.2,222.2 464.6,232.1 466.2,243.8 467.9,252.1 469.5,250.4 470.7,247.1 471.5,228.8 472.4,213.9 472.9,223.8 473.5,240.4 474.5,249.6 475.2,245.4 476.2,232.1 477.3,217.2 478.2,216.4 479.2,223.8 480.2,229.6 481.5,225.5 483.2,218.9 484.5,207.2 485.6,200.6 486.8,203.1 487.8,195.6 489.0,198.9 490.6,192.3 492.3,189.0 493.5,189.8 494.5,196.4 495.6,198.9 497.3,202.2 498.6,208.1 499.8,202.2 501.1,204.7 502.3,207.2 503.1,203.9 503.9,215.5 504.4,205.6 505.6,199.7 507.2,201.4 508.9,200.6 510.6,198.9 512.2,199.2 513.9,200.6 514.7,223.8 515.2,252.1 515.5,258.7 516.4,248.8 518.0,237.1 518.9,212.2 519.7,209.7 520.5,212.2 521.4,208.1 522.2,223.8 523.0,233.0 523.9,213.9 525.0,207.2 526.3,200.6 527.7,192.3 528.8,188.1 530.5,184.8 531.7,186.0 533.3,187.6 535.0,189.0 536.3,189.8" fill="none" stroke="#ffff00" stroke-width="0.62" stroke-linejoin="round"/><rect x="543" y="174.2" width="219" height="104.5" fill="#22222c"/><text x="543.2" y="168.80" font-size="5.8" fill="#f6f6f6" textLength="29" lengthAdjust="spacingAndGlyphs">ST Trim-1(%)</text><circle cx="758" cy="168.00" r="2.55" fill="none" stroke="#fff" stroke-width="2.5"/><text transform="translate(759.30 180.10) scale(0.92 1)" font-size="5.92" fill="#ececec" text-anchor="end">Current: 1</text><text transform="translate(728.07 180.10) scale(0.92 1)" font-size="5.92" fill="#ececec" text-anchor="end">Max: 12</text><text transform="translate(701.68 180.10) scale(0.92 1)" font-size="5.92" fill="#ececec" text-anchor="end">Min: -21</text><path d="M556.60 184.80V261.60M556.20 261.20H758.80" stroke="#cfcfcf" stroke-width="0.8" fill="none"/><text transform="translate(552.30 187.00) scale(0.92 1)" font-size="5.65" fill="#ececec" text-anchor="end">12</text><text transform="translate(552.30 202.70) scale(0.92 1)" font-size="5.65" fill="#ececec" text-anchor="end">5</text><text transform="translate(552.30 213.91) scale(0.92 1)" font-size="5.65" fill="#ececec" text-anchor="end">0</text><text transform="translate(552.30 225.12) scale(0.92 1)" font-size="5.65" fill="#ececec" text-anchor="end">-5</text><text transform="translate(552.30 236.33) scale(0.92 1)" font-size="5.65" fill="#ececec" text-anchor="end">-10</text><text transform="translate(552.30 247.55) scale(0.92 1)" font-size="5.65" fill="#ececec" text-anchor="end">-15</text><text transform="translate(552.30 261.00) scale(0.92 1)" font-size="5.65" fill="#ececec" text-anchor="end">-21</text><text transform="translate(558.55 265.70) rotate(-90) scale(0.92 1)" font-size="5.65" fill="#ececec" text-anchor="end">0</text><text transform="translate(568.64 265.70) rotate(-90) scale(0.92 1)" font-size="5.65" fill="#ececec" text-anchor="end">100</text><text transform="translate(578.73 265.70) rotate(-90) scale(0.92 1)" font-size="5.65" fill="#ececec" text-anchor="end">200</text><text transform="translate(588.82 265.70) rotate(-90) scale(0.92 1)" font-size="5.65" fill="#ececec" text-anchor="end">300</text><text transform="translate(598.91 265.70) rotate(-90) scale(0.92 1)" font-size="5.65" fill="#ececec" text-anchor="end">400</text><text transform="translate(609.00 265.70) rotate(-90) scale(0.92 1)" font-size="5.65" fill="#ececec" text-anchor="end">500</text><text transform="translate(619.09 265.70) rotate(-90) scale(0.92 1)" font-size="5.65" fill="#ececec" text-anchor="end">600</text><text transform="translate(629.18 265.70) rotate(-90) scale(0.92 1)" font-size="5.65" fill="#ececec" text-anchor="end">700</text><text transform="translate(639.27 265.70) rotate(-90) scale(0.92 1)" font-size="5.65" fill="#ececec" text-anchor="end">800</text><text transform="translate(649.36 265.70) rotate(-90) scale(0.92 1)" font-size="5.65" fill="#ececec" text-anchor="end">900</text><text transform="translate(659.45 265.70) rotate(-90) scale(0.92 1)" font-size="5.65" fill="#ececec" text-anchor="end">1000</text><text transform="translate(669.54 265.70) rotate(-90) scale(0.92 1)" font-size="5.65" fill="#ececec" text-anchor="end">1100</text><text transform="translate(679.63 265.70) rotate(-90) scale(0.92 1)" font-size="5.65" fill="#ececec" text-anchor="end">1200</text><text transform="translate(689.72 265.70) rotate(-90) scale(0.92 1)" font-size="5.65" fill="#ececec" text-anchor="end">1300</text><text transform="translate(699.81 265.70) rotate(-90) scale(0.92 1)" font-size="5.65" fill="#ececec" text-anchor="end">1400</text><text transform="translate(709.90 265.70) rotate(-90) scale(0.92 1)" font-size="5.65" fill="#ececec" text-anchor="end">1500</text><text transform="translate(719.99 265.70) rotate(-90) scale(0.92 1)" font-size="5.65" fill="#ececec" text-anchor="end">1600</text><text transform="translate(730.08 265.70) rotate(-90) scale(0.92 1)" font-size="5.65" fill="#ececec" text-anchor="end">1700</text><text transform="translate(740.17 265.70) rotate(-90) scale(0.92 1)" font-size="5.65" fill="#ececec" text-anchor="end">1800</text><text transform="translate(750.26 265.70) rotate(-90) scale(0.92 1)" font-size="5.65" fill="#ececec" text-anchor="end">1900</text><text transform="translate(760.25 265.70) rotate(-90) scale(0.92 1)" font-size="5.65" fill="#ececec" text-anchor="end">1999</text><path d="M554.00 185.40H556.60M554.00 201.10H556.60M554.00 212.31H556.60M554.00 223.52H556.60M554.00 234.73H556.60M554.00 245.95H556.60M554.00 259.40H556.60M556.60 261.20V263.60M566.69 261.20V263.60M576.78 261.20V263.60M586.87 261.20V263.60M596.96 261.20V263.60M607.05 261.20V263.60M617.14 261.20V263.60M627.23 261.20V263.60M637.32 261.20V263.60M647.41 261.20V263.60M657.50 261.20V263.60M667.59 261.20V263.60M677.68 261.20V263.60M687.77 261.20V263.60M697.86 261.20V263.60M707.95 261.20V263.60M718.04 261.20V263.60M728.13 261.20V263.60M738.22 261.20V263.60M748.31 261.20V263.60M758.30 261.20V263.60" stroke="#cfcfcf" stroke-width="0.7" fill="none"/><path d="M682.62 185.00V260.00" stroke="#5cb4ba" stroke-width="0.8" opacity="0.45"/><path d="M758.30 185.00V260.00" stroke="#0f8a14" stroke-width="0.8"/><polyline points="556.6,201.7 557.3,223.3 558.0,203.0 558.7,220.6 559.2,204.6 559.9,225.4 560.3,204.0 560.8,225.1 561.4,204.1 561.8,225.4 562.5,205.2 563.0,219.2 563.4,197.3 563.9,208.4 564.6,192.2 565.0,209.6 565.7,191.3 566.4,206.5 567.1,194.8 567.8,212.5 568.5,203.7 569.0,216.5 569.4,205.4 569.9,219.8 570.5,209.0 571.1,224.7 571.6,214.5 572.1,228.7 572.7,217.3 573.1,234.5 573.5,220.1 574.2,234.9 574.9,223.3 575.4,242.1 575.5,237.9 575.9,217.3 576.6,222.8 577.2,202.8 578.0,210.6 578.2,191.4 578.5,194.1 579.1,210.3 579.8,199.5 580.5,214.3 581.2,202.3 581.7,220.0 582.4,207.7 583.1,221.7 583.6,200.1 584.1,218.0 584.5,195.4 584.5,191.4 585.2,220.3 585.7,208.4 586.2,223.7 586.7,209.2 587.4,224.5 587.9,207.4 588.6,223.7 589.2,211.2 589.6,227.5 590.3,212.7 591.0,227.3 591.6,212.2 592.2,230.4 592.8,214.5 593.5,236.5 594.0,213.3 594.7,239.5 595.2,216.7 595.6,242.3 596.3,217.6 596.5,249.6 596.9,240.7 597.4,204.4 597.9,230.3 598.1,198.9 598.6,205.0 599.3,235.6 599.9,217.7 600.6,247.0 601.1,258.7 601.2,221.8 601.8,243.5 602.4,209.2 603.1,224.2 603.7,199.6 604.3,217.8 604.9,198.1 605.6,216.3 605.8,193.9 606.2,199.5 606.9,225.0 607.5,211.2 608.2,233.7 608.8,217.9 609.6,234.0 610.1,212.9 610.8,239.2 611.1,240.4 611.4,209.7 612.0,225.8 612.5,203.4 613.1,217.8 613.3,202.2 613.7,216.3 614.0,200.0 614.3,214.3 614.6,200.3 614.9,214.1 615.1,200.9 615.4,212.2 615.6,200.3 615.9,212.3 616.1,200.6 616.4,213.0 616.7,199.8 617.0,211.0 617.3,199.7 617.6,210.9 618.0,199.6 618.2,211.5 618.4,199.4 618.7,210.7 619.1,199.3 619.3,210.4 619.7,197.3 619.9,209.1 620.2,198.1 620.6,208.0 620.9,196.3 621.1,205.7 621.4,194.3 621.6,206.0 622.0,192.2 622.3,203.5 622.5,192.5 622.7,189.3 622.8,204.8 623.2,192.1 623.4,205.9 623.7,192.9 624.0,206.8 624.3,194.0 624.6,205.7 624.9,195.9 625.2,208.3 625.5,196.1 625.9,207.8 626.2,198.8 626.5,208.4 626.7,199.9 627.0,209.7 627.3,199.8 627.6,210.7 627.8,200.7 628.1,210.5 628.4,199.8 628.7,210.6 628.9,200.9 629.2,209.9 629.5,200.4 629.9,212.2 630.2,199.6 630.5,211.4 630.8,201.4 631.2,211.8 631.5,200.8 631.8,212.9 632.1,200.7 632.4,211.2 632.8,201.9 633.1,211.9 633.4,202.6 633.7,212.5 634.0,201.7 634.2,211.4 634.5,195.7 634.7,190.3 634.8,210.8 635.1,197.1 635.5,212.5 635.8,203.0 636.2,216.5 636.4,204.8 636.6,216.7 637.0,204.8 637.3,216.1 637.6,203.7 638.0,216.9 638.2,205.4 638.4,216.4 638.7,202.5 638.9,217.4 639.2,200.5 639.5,216.4 639.7,195.2 639.8,191.4 640.0,218.6 640.3,195.3 640.7,215.9 641.0,201.7 641.3,218.1 641.7,205.8 642.0,218.0 642.3,207.8 642.6,218.5 642.8,208.6 643.1,220.2 643.4,207.1 643.7,219.2 644.0,208.7 644.2,221.7 644.5,208.9 644.9,225.5 645.2,211.2 645.5,236.8 645.6,233.5 646.3,197.1 646.7,212.7 646.8,184.8 647.3,189.7 647.8,207.8 648.3,189.5 648.8,206.7 649.3,192.5 649.7,207.5 650.4,195.5 650.9,209.5 651.5,196.7 652.0,205.2 652.3,215.6 652.5,197.0 652.7,218.3 652.8,191.4 653.0,195.9 653.2,216.3 653.6,197.8 653.9,216.4 654.1,198.4 654.3,216.2 654.6,203.2 654.9,215.9 655.1,203.3 655.4,216.1 655.7,204.2 656.0,217.1 656.4,206.5 656.8,218.1 657.1,205.6 657.5,218.3 657.8,207.7 658.0,218.6 658.2,206.7 658.5,219.6 658.8,207.5 659.1,220.1 659.4,208.7 659.7,219.6 660.0,208.9 660.3,221.2 660.6,210.0 660.8,219.9 661.2,208.8 661.4,221.5 661.8,209.4 662.1,220.7 662.3,210.7 662.6,223.4 662.8,209.3 663.0,222.4 663.2,209.6 663.5,222.6 663.7,209.3 664.1,222.8 664.4,210.8 664.7,224.1 665.0,210.6 665.3,229.6 665.6,214.1 665.9,229.0 666.1,234.1 666.2,212.9 666.5,227.8 666.8,207.9 667.2,220.5 667.5,203.9 667.7,218.6 668.0,201.3 668.3,220.9 668.6,201.8 668.8,218.6 669.0,203.1 669.4,218.4 669.6,204.3 669.8,218.1 670.1,203.4 670.3,218.6 670.6,204.5 670.9,219.4 671.2,204.1 671.5,217.2 671.9,203.3 672.2,217.2 672.6,201.7 672.9,215.4 673.2,200.7 673.4,214.4 673.7,201.5 673.9,216.7 674.3,202.2 674.5,216.5 674.8,206.0 675.1,219.8 675.4,206.5 675.7,220.5 675.9,208.4 676.2,223.5 676.5,209.3 676.7,225.0 677.0,211.3 677.3,225.1 677.6,212.1 677.7,229.6 677.9,226.6 678.2,209.3 678.6,222.7 678.9,204.4 679.2,219.8 679.5,199.9 679.8,215.8 680.1,201.2 680.5,217.5 680.8,200.3 681.0,218.4 681.3,201.9 681.5,218.0 681.8,199.9 682.2,221.9 682.4,185.3 682.8,194.8 683.2,238.6 683.8,210.8 684.2,245.1 684.6,252.1 684.9,227.7 685.3,247.7 685.8,224.2 686.5,242.4 687.2,219.4 687.6,238.7 688.2,218.7 688.7,239.6 689.1,222.4 689.6,242.5 690.3,223.1 691.0,248.4 691.0,249.6 691.7,216.1 692.3,226.6 693.0,209.4 693.6,222.7 694.2,206.5 694.6,216.2 695.1,202.5 695.7,211.4 696.0,195.6 696.2,200.1 696.7,213.0 697.1,208.0 697.8,216.6 698.5,212.5 699.2,219.8 699.8,214.4 700.3,224.6 700.8,217.3 701.0,227.5 701.4,224.9 701.8,215.4 702.2,222.4 702.9,214.8 703.5,219.8 704.0,213.4 704.5,219.5 705.1,212.6 705.5,219.1 706.0,211.5 706.7,219.5 707.3,210.2 707.8,216.3 708.4,208.0 709.1,213.4 709.6,203.4 710.2,211.7 710.7,196.3 711.3,210.4 711.3,191.4 711.8,195.8 712.2,212.2 712.8,204.1 713.2,214.2 713.9,204.2 714.5,213.0 715.1,202.1 715.8,212.0 716.0,197.3 716.5,201.1 717.2,219.3 717.8,206.9 717.9,227.5 718.4,222.3 718.8,204.8 719.3,219.5 719.9,204.9 720.5,218.4 721.2,206.9 721.8,219.8 722.5,206.5 723.3,218.6 723.7,203.9 724.2,220.4 724.7,205.2 725.4,229.4 725.6,243.4 725.9,210.1 726.4,234.9 727.0,206.4 727.6,227.6 728.4,198.8 728.4,193.9 728.8,218.6 729.4,201.9 729.8,217.8 730.4,204.9 731.1,209.8 731.7,207.7 750.3,207.7 751.7,215.5 753.0,221.3 753.7,233.8 754.7,218.9 755.8,210.5 757.0,201.4 757.6,212.2 758.3,213.9" fill="none" stroke="#ffff00" stroke-width="0.68" stroke-linejoin="round"/><rect x="765" y="174.2" width="219" height="104.5" fill="#22222c"/><text x="765.2" y="168.80" font-size="5.8" fill="#f6f6f6" textLength="29" lengthAdjust="spacingAndGlyphs">ST Trim-2(%)</text><circle cx="980" cy="168.00" r="2.55" fill="none" stroke="#fff" stroke-width="2.5"/><text transform="translate(981.30 180.10) scale(0.92 1)" font-size="5.92" fill="#ececec" text-anchor="end">Current: 4</text><text transform="translate(950.07 180.10) scale(0.92 1)" font-size="5.92" fill="#ececec" text-anchor="end">Max: 13</text><text transform="translate(923.68 180.10) scale(0.92 1)" font-size="5.92" fill="#ececec" text-anchor="end">Min: -22</text><path d="M778.60 184.80V261.60M778.20 261.20H980.80" stroke="#cfcfcf" stroke-width="0.8" fill="none"/><text transform="translate(774.30 187.00) scale(0.92 1)" font-size="5.65" fill="#ececec" text-anchor="end">13</text><text transform="translate(774.30 193.34) scale(0.92 1)" font-size="5.65" fill="#ececec" text-anchor="end">10</text><text transform="translate(774.30 203.91) scale(0.92 1)" font-size="5.65" fill="#ececec" text-anchor="end">5</text><text transform="translate(774.30 214.49) scale(0.92 1)" font-size="5.65" fill="#ececec" text-anchor="end">0</text><text transform="translate(774.30 225.06) scale(0.92 1)" font-size="5.65" fill="#ececec" text-anchor="end">-5</text><text transform="translate(774.30 235.63) scale(0.92 1)" font-size="5.65" fill="#ececec" text-anchor="end">-10</text><text transform="translate(774.30 246.20) scale(0.92 1)" font-size="5.65" fill="#ececec" text-anchor="end">-15</text><text transform="translate(774.30 261.00) scale(0.92 1)" font-size="5.65" fill="#ececec" text-anchor="end">-22</text><text transform="translate(780.55 265.70) rotate(-90) scale(0.92 1)" font-size="5.65" fill="#ececec" text-anchor="end">0</text><text transform="translate(790.64 265.70) rotate(-90) scale(0.92 1)" font-size="5.65" fill="#ececec" text-anchor="end">100</text><text transform="translate(800.73 265.70) rotate(-90) scale(0.92 1)" font-size="5.65" fill="#ececec" text-anchor="end">200</text><text transform="translate(810.82 265.70) rotate(-90) scale(0.92 1)" font-size="5.65" fill="#ececec" text-anchor="end">300</text><text transform="translate(820.91 265.70) rotate(-90) scale(0.92 1)" font-size="5.65" fill="#ececec" text-anchor="end">400</text><text transform="translate(831.00 265.70) rotate(-90) scale(0.92 1)" font-size="5.65" fill="#ececec" text-anchor="end">500</text><text transform="translate(841.09 265.70) rotate(-90) scale(0.92 1)" font-size="5.65" fill="#ececec" text-anchor="end">600</text><text transform="translate(851.18 265.70) rotate(-90) scale(0.92 1)" font-size="5.65" fill="#ececec" text-anchor="end">700</text><text transform="translate(861.27 265.70) rotate(-90) scale(0.92 1)" font-size="5.65" fill="#ececec" text-anchor="end">800</text><text transform="translate(871.36 265.70) rotate(-90) scale(0.92 1)" font-size="5.65" fill="#ececec" text-anchor="end">900</text><text transform="translate(881.45 265.70) rotate(-90) scale(0.92 1)" font-size="5.65" fill="#ececec" text-anchor="end">1000</text><text transform="translate(891.54 265.70) rotate(-90) scale(0.92 1)" font-size="5.65" fill="#ececec" text-anchor="end">1100</text><text transform="translate(901.63 265.70) rotate(-90) scale(0.92 1)" font-size="5.65" fill="#ececec" text-anchor="end">1200</text><text transform="translate(911.72 265.70) rotate(-90) scale(0.92 1)" font-size="5.65" fill="#ececec" text-anchor="end">1300</text><text transform="translate(921.81 265.70) rotate(-90) scale(0.92 1)" font-size="5.65" fill="#ececec" text-anchor="end">1400</text><text transform="translate(931.90 265.70) rotate(-90) scale(0.92 1)" font-size="5.65" fill="#ececec" text-anchor="end">1500</text><text transform="translate(941.99 265.70) rotate(-90) scale(0.92 1)" font-size="5.65" fill="#ececec" text-anchor="end">1600</text><text transform="translate(952.08 265.70) rotate(-90) scale(0.92 1)" font-size="5.65" fill="#ececec" text-anchor="end">1700</text><text transform="translate(962.17 265.70) rotate(-90) scale(0.92 1)" font-size="5.65" fill="#ececec" text-anchor="end">1800</text><text transform="translate(972.26 265.70) rotate(-90) scale(0.92 1)" font-size="5.65" fill="#ececec" text-anchor="end">1900</text><text transform="translate(982.25 265.70) rotate(-90) scale(0.92 1)" font-size="5.65" fill="#ececec" text-anchor="end">1999</text><path d="M776.00 185.40H778.60M776.00 191.74H778.60M776.00 202.31H778.60M776.00 212.89H778.60M776.00 223.46H778.60M776.00 234.03H778.60M776.00 244.60H778.60M776.00 259.40H778.60M778.60 261.20V263.60M788.69 261.20V263.60M798.78 261.20V263.60M808.87 261.20V263.60M818.96 261.20V263.60M829.05 261.20V263.60M839.14 261.20V263.60M849.23 261.20V263.60M859.32 261.20V263.60M869.41 261.20V263.60M879.50 261.20V263.60M889.59 261.20V263.60M899.68 261.20V263.60M909.77 261.20V263.60M919.86 261.20V263.60M929.95 261.20V263.60M940.04 261.20V263.60M950.13 261.20V263.60M960.22 261.20V263.60M970.31 261.20V263.60M980.30 261.20V263.60" stroke="#cfcfcf" stroke-width="0.7" fill="none"/><path d="M904.62 185.00V260.00" stroke="#5cb4ba" stroke-width="0.8" opacity="0.45"/><path d="M980.30 185.00V260.00" stroke="#0f8a14" stroke-width="0.8"/><polyline points="778.6,203.6 779.3,221.9 779.8,200.8 780.4,222.4 781.1,203.1 781.7,222.4 782.4,206.3 782.9,225.1 783.5,206.2 784.1,227.5 784.6,205.7 785.2,217.2 785.7,194.5 786.4,210.9 787.0,193.1 787.4,208.5 787.9,194.8 788.5,206.7 789.1,197.1 789.8,213.8 790.4,203.7 791.0,218.1 791.8,207.3 792.3,222.2 792.8,212.1 793.2,226.4 793.8,213.4 794.4,229.2 794.9,217.3 795.3,231.9 796.0,221.5 796.4,237.1 796.8,222.9 797.4,241.0 797.5,238.5 798.0,216.5 798.5,223.4 799.3,200.9 799.8,213.9 800.2,193.2 800.3,196.7 800.8,212.8 801.5,199.5 802.2,215.2 802.9,204.5 803.4,219.0 804.1,207.6 804.5,222.9 805.0,206.3 805.6,219.4 806.1,197.3 806.5,193.2 806.6,219.2 807.1,201.8 807.8,222.9 808.4,210.8 809.0,223.6 809.5,209.6 810.0,224.4 810.5,210.8 811.0,226.1 811.7,213.0 812.2,227.5 812.7,213.2 813.3,229.6 814.0,212.8 814.4,230.9 814.8,210.8 815.5,231.6 816.1,213.8 816.8,241.1 817.2,215.7 818.0,243.7 818.5,248.0 818.5,216.3 819.2,237.0 819.7,203.6 820.1,200.2 820.2,224.7 820.8,209.1 821.3,234.2 821.7,214.0 822.3,243.3 823.0,224.1 823.1,256.6 823.7,240.8 824.3,209.6 824.9,225.8 825.7,204.6 826.2,220.0 826.9,198.3 827.6,217.6 827.8,195.5 828.1,201.5 828.7,221.6 829.3,208.9 830.0,233.2 830.5,217.4 830.9,233.7 831.4,219.1 831.9,235.7 832.3,212.1 833.0,237.1 833.1,239.4 833.6,206.0 834.0,223.8 834.4,205.2 835.1,218.9 835.4,202.5 835.7,216.9 835.9,202.8 836.2,215.1 836.4,201.2 836.7,213.1 837.0,201.3 837.3,213.1 837.6,201.8 837.8,212.9 838.1,202.9 838.4,212.4 838.7,201.1 839.0,213.6 839.3,200.8 839.6,212.2 839.9,201.0 840.3,211.8 840.6,200.9 840.9,211.6 841.2,200.0 841.6,209.3 841.9,198.5 842.1,208.3 842.5,196.9 842.8,207.2 843.1,195.2 843.4,207.7 843.6,195.2 844.0,205.3 844.3,194.1 844.7,203.7 844.7,191.2 845.0,192.1 845.2,206.4 845.4,195.1 845.8,206.6 846.1,196.0 846.4,207.0 846.6,197.7 847.0,208.8 847.2,198.4 847.5,209.4 847.8,200.1 848.2,209.8 848.5,198.9 848.8,209.0 849.1,199.7 849.5,209.7 849.9,202.3 850.1,211.8 850.4,200.7 850.6,210.4 850.8,202.3 851.0,211.7 851.3,200.9 851.5,211.1 851.9,201.6 852.2,212.2 852.6,202.0 852.8,211.5 853.2,201.5 853.5,213.2 853.8,203.4 854.2,212.7 854.4,202.7 854.7,213.7 855.0,203.1 855.3,213.0 855.7,203.7 855.9,214.1 856.3,200.4 856.6,211.6 856.7,192.1 856.8,194.4 857.2,213.2 857.4,198.8 857.6,215.3 857.9,205.1 858.2,216.0 858.4,205.9 858.8,216.7 859.1,205.4 859.5,217.1 859.8,207.0 860.1,217.8 860.5,206.6 860.8,216.2 861.1,200.4 861.4,217.9 861.6,197.3 861.8,193.2 861.9,217.6 862.2,196.1 862.6,218.1 862.8,201.4 863.1,218.6 863.4,204.9 863.7,218.8 864.0,209.0 864.3,218.2 864.7,208.6 865.0,219.9 865.3,210.1 865.7,221.3 865.9,207.9 866.3,219.7 866.7,210.9 866.9,226.6 867.2,213.2 867.5,236.0 867.8,225.5 868.5,194.2 868.8,186.9 869.2,207.2 869.8,191.2 870.4,206.0 870.9,194.7 871.4,206.7 871.8,196.6 872.5,209.1 873.0,196.1 873.5,210.7 874.0,206.8 874.4,217.0 874.6,198.2 874.8,193.2 874.9,216.9 875.3,197.1 875.6,217.7 875.9,200.8 876.2,217.3 876.4,203.4 876.7,217.1 876.9,203.2 877.1,216.3 877.4,205.4 877.6,217.9 878.0,207.5 878.2,218.4 878.5,206.0 878.9,218.2 879.1,206.7 879.5,218.4 879.8,208.1 880.1,220.0 880.3,208.1 880.6,220.4 880.9,208.1 881.2,221.6 881.5,209.3 881.9,220.1 882.2,210.5 882.4,220.8 882.7,210.8 883.0,222.2 883.2,209.2 883.6,221.0 883.9,210.1 884.1,220.8 884.4,210.5 884.7,221.7 884.9,210.1 885.1,222.5 885.4,212.0 885.8,224.0 886.0,211.5 886.4,224.9 886.6,210.6 886.9,225.8 887.2,211.6 887.6,229.5 887.9,215.2 888.1,233.4 888.2,232.3 888.4,210.0 888.7,226.1 888.9,206.2 889.1,220.4 889.4,201.9 889.6,219.6 889.9,204.6 890.2,219.9 890.5,204.5 890.7,218.6 891.0,204.9 891.2,218.6 891.5,204.8 891.8,219.6 892.1,203.9 892.5,219.6 892.8,204.3 893.1,217.0 893.4,205.4 893.7,217.5 893.9,205.1 894.2,216.5 894.5,203.1 894.9,215.8 895.2,202.5 895.5,215.3 895.8,204.4 896.0,216.7 896.3,204.8 896.6,218.0 897.0,205.2 897.4,220.6 897.7,208.7 898.0,223.0 898.4,209.9 898.6,223.6 899.0,210.5 899.2,226.2 899.5,210.6 899.7,229.2 899.8,227.6 900.1,210.7 900.4,225.0 900.8,205.2 901.1,218.7 901.5,203.0 901.8,216.6 902.1,201.9 902.4,219.0 902.6,200.8 902.8,218.8 903.1,202.1 903.5,218.6 903.7,202.1 903.9,217.3 904.4,187.4 904.4,194.1 905.0,229.9 905.5,209.0 906.1,246.3 906.6,250.4 906.6,224.5 907.3,245.3 907.9,221.9 908.6,240.6 909.3,220.5 909.9,235.8 910.6,222.9 911.0,238.4 911.6,224.5 912.1,244.9 912.5,223.7 913.0,248.0 913.1,243.8 913.7,215.1 914.4,227.0 914.8,209.8 915.4,222.5 915.9,207.7 916.4,218.5 916.8,203.9 917.4,213.6 918.0,198.7 918.0,197.1 918.6,212.3 919.3,209.5 920.0,217.3 920.6,212.9 921.2,219.6 921.7,215.1 922.1,222.9 922.6,215.9 923.0,227.2 923.1,226.3 923.7,215.7 924.4,221.6 924.9,214.6 925.4,219.8 926.1,213.6 926.7,219.3 927.3,212.6 927.7,219.0 928.3,211.7 928.7,219.7 929.2,211.6 929.8,216.5 930.4,208.1 930.8,214.0 931.5,205.8 932.0,212.3 932.5,200.0 932.9,210.7 933.3,193.2 933.5,197.9 934.1,213.3 934.6,205.5 935.0,213.5 935.8,203.9 936.3,214.4 936.7,204.2 937.4,213.3 938.0,198.7 938.0,201.1 938.4,216.1 939.1,204.3 939.6,222.3 939.9,227.2 940.1,205.7 940.6,222.2 941.3,205.9 941.7,220.0 942.3,206.0 942.9,217.2 943.4,206.8 944.0,218.2 944.7,207.2 945.2,220.3 945.8,206.4 946.4,220.3 947.0,203.8 947.6,242.2 947.8,238.1 948.3,207.2 948.9,233.8 949.5,205.7 949.9,221.5 950.4,195.5 950.6,197.8 951.3,218.7 951.9,205.5 952.5,215.7 952.9,199.4 953.7,208.5 972.3,208.5 973.7,215.9 975.0,221.4 975.7,233.1 976.7,219.0 977.8,211.2 979.0,202.6 979.6,212.8 980.3,214.3" fill="none" stroke="#ffff00" stroke-width="0.68" stroke-linejoin="round"/><rect x="321" y="291.6" width="219" height="104.5" fill="#22222c"/><text x="321.2" y="286.20" font-size="5.8" fill="#f6f6f6" textLength="29" lengthAdjust="spacingAndGlyphs">LT Trim-1(%)</text><circle cx="536" cy="285.40" r="2.55" fill="none" stroke="#fff" stroke-width="2.5"/><text transform="translate(537.30 297.50) scale(0.92 1)" font-size="5.92" fill="#ececec" text-anchor="end">Current: -3</text><text transform="translate(504.25 297.50) scale(0.92 1)" font-size="5.92" fill="#ececec" text-anchor="end">Max: 8</text><text transform="translate(480.90 297.50) scale(0.92 1)" font-size="5.92" fill="#ececec" text-anchor="end">Min: -18</text><path d="M334.30 302.20V379.00M333.90 378.60H536.80" stroke="#cfcfcf" stroke-width="0.8" fill="none"/><text transform="translate(330.00 304.40) scale(0.92 1)" font-size="5.65" fill="#ececec" text-anchor="end">8</text><text transform="translate(330.00 312.94) scale(0.92 1)" font-size="5.65" fill="#ececec" text-anchor="end">5</text><text transform="translate(330.00 327.17) scale(0.92 1)" font-size="5.65" fill="#ececec" text-anchor="end">0</text><text transform="translate(330.00 341.40) scale(0.92 1)" font-size="5.65" fill="#ececec" text-anchor="end">-5</text><text transform="translate(330.00 355.63) scale(0.92 1)" font-size="5.65" fill="#ececec" text-anchor="end">-10</text><text transform="translate(330.00 369.86) scale(0.92 1)" font-size="5.65" fill="#ececec" text-anchor="end">-15</text><text transform="translate(330.00 378.40) scale(0.92 1)" font-size="5.65" fill="#ececec" text-anchor="end">-18</text><text transform="translate(336.25 383.10) rotate(-90) scale(0.92 1)" font-size="5.65" fill="#ececec" text-anchor="end">0</text><text transform="translate(346.36 383.10) rotate(-90) scale(0.92 1)" font-size="5.65" fill="#ececec" text-anchor="end">100</text><text transform="translate(356.46 383.10) rotate(-90) scale(0.92 1)" font-size="5.65" fill="#ececec" text-anchor="end">200</text><text transform="translate(366.57 383.10) rotate(-90) scale(0.92 1)" font-size="5.65" fill="#ececec" text-anchor="end">300</text><text transform="translate(376.67 383.10) rotate(-90) scale(0.92 1)" font-size="5.65" fill="#ececec" text-anchor="end">400</text><text transform="translate(386.78 383.10) rotate(-90) scale(0.92 1)" font-size="5.65" fill="#ececec" text-anchor="end">500</text><text transform="translate(396.88 383.10) rotate(-90) scale(0.92 1)" font-size="5.65" fill="#ececec" text-anchor="end">600</text><text transform="translate(406.99 383.10) rotate(-90) scale(0.92 1)" font-size="5.65" fill="#ececec" text-anchor="end">700</text><text transform="translate(417.09 383.10) rotate(-90) scale(0.92 1)" font-size="5.65" fill="#ececec" text-anchor="end">800</text><text transform="translate(427.20 383.10) rotate(-90) scale(0.92 1)" font-size="5.65" fill="#ececec" text-anchor="end">900</text><text transform="translate(437.30 383.10) rotate(-90) scale(0.92 1)" font-size="5.65" fill="#ececec" text-anchor="end">1000</text><text transform="translate(447.41 383.10) rotate(-90) scale(0.92 1)" font-size="5.65" fill="#ececec" text-anchor="end">1100</text><text transform="translate(457.51 383.10) rotate(-90) scale(0.92 1)" font-size="5.65" fill="#ececec" text-anchor="end">1200</text><text transform="translate(467.62 383.10) rotate(-90) scale(0.92 1)" font-size="5.65" fill="#ececec" text-anchor="end">1300</text><text transform="translate(477.72 383.10) rotate(-90) scale(0.92 1)" font-size="5.65" fill="#ececec" text-anchor="end">1400</text><text transform="translate(487.83 383.10) rotate(-90) scale(0.92 1)" font-size="5.65" fill="#ececec" text-anchor="end">1500</text><text transform="translate(497.93 383.10) rotate(-90) scale(0.92 1)" font-size="5.65" fill="#ececec" text-anchor="end">1600</text><text transform="translate(508.04 383.10) rotate(-90) scale(0.92 1)" font-size="5.65" fill="#ececec" text-anchor="end">1700</text><text transform="translate(518.14 383.10) rotate(-90) scale(0.92 1)" font-size="5.65" fill="#ececec" text-anchor="end">1800</text><text transform="translate(528.25 383.10) rotate(-90) scale(0.92 1)" font-size="5.65" fill="#ececec" text-anchor="end">1900</text><text transform="translate(538.25 383.10) rotate(-90) scale(0.92 1)" font-size="5.65" fill="#ececec" text-anchor="end">1999</text><path d="M331.70 302.80H334.30M331.70 311.34H334.30M331.70 325.57H334.30M331.70 339.80H334.30M331.70 354.03H334.30M331.70 368.26H334.30M331.70 376.80H334.30M334.30 378.60V381.00M344.41 378.60V381.00M354.51 378.60V381.00M364.62 378.60V381.00M374.72 378.60V381.00M384.83 378.60V381.00M394.93 378.60V381.00M405.04 378.60V381.00M415.14 378.60V381.00M425.25 378.60V381.00M435.35 378.60V381.00M445.46 378.60V381.00M455.56 378.60V381.00M465.67 378.60V381.00M475.77 378.60V381.00M485.88 378.60V381.00M495.98 378.60V381.00M506.09 378.60V381.00M516.19 378.60V381.00M526.30 378.60V381.00M536.30 378.60V381.00" stroke="#cfcfcf" stroke-width="0.7" fill="none"/><path d="M460.51 302.40V377.40" stroke="#5cb4ba" stroke-width="0.8" opacity="0.8"/><path d="M536.30 302.40V377.40" stroke="#0f8a14" stroke-width="0.8"/><polyline points="334.3,376.5 342.6,376.5 342.9,368.2 343.6,359.1 343.9,319.2 344.6,310.6 349.2,310.6 349.6,357.4 350.1,367.7 350.6,367.7 350.9,325.1 351.9,325.1 352.6,330.9 353.4,333.4 353.9,325.1 355.1,322.6 356.7,319.2 358.4,316.2 358.9,316.2 359.2,336.2 362.2,336.2 362.5,367.7 362.7,336.2 363.5,336.2 363.9,316.2 369.5,316.2 369.8,319.2 371.7,319.2 372.2,321.7 372.5,310.6 373.3,311.8 374.5,316.2 377.1,316.2 377.8,319.2 378.8,322.1 387.1,322.1 387.8,325.1 398.7,325.1 399.4,320.9 400.1,315.9 400.7,313.4 402.4,310.6 404.1,307.6 405.4,305.1 411.5,305.1 411.9,319.2 417.0,319.2 417.3,305.1 423.2,305.1 423.5,319.2 425.3,319.2 426.5,315.9 428.1,311.8 429.3,310.6 429.8,305.1 430.3,302.3 430.0,302.3 433.7,302.3 434.0,310.6 438.6,310.6 439.0,302.3 443.0,302.3 443.3,310.6 459.1,310.6 459.6,332.5 459.9,367.7 460.2,340.8 460.7,333.4 461.6,335.0 462.4,340.8 464.1,350.0 465.7,359.1 467.4,364.9 468.5,374.1 469.5,367.7 470.2,367.7 470.7,376.5 473.5,376.5 473.9,344.2 474.2,339.5 481.5,339.5 481.8,345.0 482.8,345.0 483.2,319.2 484.5,319.2 484.8,345.0 486.1,345.0 486.5,310.6 487.6,310.6 488.0,367.7 489.0,367.7 489.3,319.2 491.5,319.2 491.8,310.6 495.1,310.6 495.6,302.3 501.8,302.3 502.3,310.6 503.1,310.6 503.6,302.3 504.4,302.3 504.8,310.6 505.6,310.6 505.9,367.7 506.4,376.5 513.9,376.5 514.2,322.1 514.7,339.2 515.0,376.5 523.0,376.5 523.4,345.0 526.8,345.0 527.2,336.2 530.2,336.2 530.7,345.0 531.3,350.8 536.3,350.8" fill="none" stroke="#ffff00" stroke-width="0.62" stroke-linejoin="round"/><rect x="543" y="291.6" width="219" height="104.5" fill="#22222c"/><text x="543.2" y="286.20" font-size="5.8" fill="#f6f6f6" textLength="29" lengthAdjust="spacingAndGlyphs">LT Trim-2(%)</text><circle cx="758" cy="285.40" r="2.55" fill="none" stroke="#fff" stroke-width="2.5"/><text transform="translate(759.30 297.50) scale(0.92 1)" font-size="5.92" fill="#ececec" text-anchor="end">Current: -4</text><text transform="translate(726.25 297.50) scale(0.92 1)" font-size="5.92" fill="#ececec" text-anchor="end">Max: 7</text><text transform="translate(702.90 297.50) scale(0.92 1)" font-size="5.92" fill="#ececec" text-anchor="end">Min: -18</text><path d="M556.60 302.20V379.00M556.20 378.60H758.80" stroke="#cfcfcf" stroke-width="0.8" fill="none"/><text transform="translate(552.30 304.40) scale(0.92 1)" font-size="5.65" fill="#ececec" text-anchor="end">7</text><text transform="translate(552.30 310.32) scale(0.92 1)" font-size="5.65" fill="#ececec" text-anchor="end">5</text><text transform="translate(552.30 325.12) scale(0.92 1)" font-size="5.65" fill="#ececec" text-anchor="end">0</text><text transform="translate(552.30 339.92) scale(0.92 1)" font-size="5.65" fill="#ececec" text-anchor="end">-5</text><text transform="translate(552.30 354.72) scale(0.92 1)" font-size="5.65" fill="#ececec" text-anchor="end">-10</text><text transform="translate(552.30 369.52) scale(0.92 1)" font-size="5.65" fill="#ececec" text-anchor="end">-15</text><text transform="translate(552.30 378.40) scale(0.92 1)" font-size="5.65" fill="#ececec" text-anchor="end">-18</text><text transform="translate(558.55 383.10) rotate(-90) scale(0.92 1)" font-size="5.65" fill="#ececec" text-anchor="end">0</text><text transform="translate(568.64 383.10) rotate(-90) scale(0.92 1)" font-size="5.65" fill="#ececec" text-anchor="end">100</text><text transform="translate(578.73 383.10) rotate(-90) scale(0.92 1)" font-size="5.65" fill="#ececec" text-anchor="end">200</text><text transform="translate(588.82 383.10) rotate(-90) scale(0.92 1)" font-size="5.65" fill="#ececec" text-anchor="end">300</text><text transform="translate(598.91 383.10) rotate(-90) scale(0.92 1)" font-size="5.65" fill="#ececec" text-anchor="end">400</text><text transform="translate(609.00 383.10) rotate(-90) scale(0.92 1)" font-size="5.65" fill="#ececec" text-anchor="end">500</text><text transform="translate(619.09 383.10) rotate(-90) scale(0.92 1)" font-size="5.65" fill="#ececec" text-anchor="end">600</text><text transform="translate(629.18 383.10) rotate(-90) scale(0.92 1)" font-size="5.65" fill="#ececec" text-anchor="end">700</text><text transform="translate(639.27 383.10) rotate(-90) scale(0.92 1)" font-size="5.65" fill="#ececec" text-anchor="end">800</text><text transform="translate(649.36 383.10) rotate(-90) scale(0.92 1)" font-size="5.65" fill="#ececec" text-anchor="end">900</text><text transform="translate(659.45 383.10) rotate(-90) scale(0.92 1)" font-size="5.65" fill="#ececec" text-anchor="end">1000</text><text transform="translate(669.54 383.10) rotate(-90) scale(0.92 1)" font-size="5.65" fill="#ececec" text-anchor="end">1100</text><text transform="translate(679.63 383.10) rotate(-90) scale(0.92 1)" font-size="5.65" fill="#ececec" text-anchor="end">1200</text><text transform="translate(689.72 383.10) rotate(-90) scale(0.92 1)" font-size="5.65" fill="#ececec" text-anchor="end">1300</text><text transform="translate(699.81 383.10) rotate(-90) scale(0.92 1)" font-size="5.65" fill="#ececec" text-anchor="end">1400</text><text transform="translate(709.90 383.10) rotate(-90) scale(0.92 1)" font-size="5.65" fill="#ececec" text-anchor="end">1500</text><text transform="translate(719.99 383.10) rotate(-90) scale(0.92 1)" font-size="5.65" fill="#ececec" text-anchor="end">1600</text><text transform="translate(730.08 383.10) rotate(-90) scale(0.92 1)" font-size="5.65" fill="#ececec" text-anchor="end">1700</text><text transform="translate(740.17 383.10) rotate(-90) scale(0.92 1)" font-size="5.65" fill="#ececec" text-anchor="end">1800</text><text transform="translate(750.26 383.10) rotate(-90) scale(0.92 1)" font-size="5.65" fill="#ececec" text-anchor="end">1900</text><text transform="translate(760.25 383.10) rotate(-90) scale(0.92 1)" font-size="5.65" fill="#ececec" text-anchor="end">1999</text><path d="M554.00 302.80H556.60M554.00 308.72H556.60M554.00 323.52H556.60M554.00 338.32H556.60M554.00 353.12H556.60M554.00 367.92H556.60M554.00 376.80H556.60M556.60 378.60V381.00M566.69 378.60V381.00M576.78 378.60V381.00M586.87 378.60V381.00M596.96 378.60V381.00M607.05 378.60V381.00M617.14 378.60V381.00M627.23 378.60V381.00M637.32 378.60V381.00M647.41 378.60V381.00M657.50 378.60V381.00M667.59 378.60V381.00M677.68 378.60V381.00M687.77 378.60V381.00M697.86 378.60V381.00M707.95 378.60V381.00M718.04 378.60V381.00M728.13 378.60V381.00M738.22 378.60V381.00M748.31 378.60V381.00M758.30 378.60V381.00" stroke="#cfcfcf" stroke-width="0.7" fill="none"/><path d="M682.62 302.40V377.40" stroke="#5cb4ba" stroke-width="0.8" opacity="0.6"/><path d="M758.30 302.40V377.40" stroke="#0f8a14" stroke-width="0.8"/><polyline points="556.6,358.3 558.8,358.3 559.1,367.7 565.9,367.7 566.3,316.7 567.3,315.9 567.6,305.1 570.4,305.1 571.2,309.3 571.7,322.6 572.2,367.4 572.6,376.5 572.9,323.1 574.6,323.1 575.4,330.9 575.9,323.1 577.9,323.1 578.7,319.2 580.4,314.3 581.2,314.3 581.5,332.5 582.9,335.9 583.7,337.8 584.2,337.8 584.5,373.6 584.7,337.8 585.5,337.8 585.9,314.3 587.0,313.4 588.7,314.3 589.5,315.9 591.5,316.7 592.8,320.1 594.2,320.9 594.5,308.1 595.3,307.6 596.2,313.4 599.1,313.9 599.8,316.7 600.8,319.6 610.8,319.6 611.4,323.1 620.7,323.1 621.4,319.2 622.4,312.6 623.6,308.1 625.2,307.6 625.7,305.1 633.5,305.1 633.9,316.2 639.3,316.2 639.7,305.1 645.2,305.1 645.5,316.2 649.0,316.2 649.3,310.6 651.8,310.6 652.1,302.3 652.0,302.3 655.7,302.3 656.0,310.6 657.0,310.6 657.3,307.6 660.6,307.6 661.0,302.3 665.0,302.3 665.3,307.6 669.9,307.6 670.3,310.6 677.7,310.6 678.2,315.9 681.1,316.7 681.6,340.8 681.9,375.7 682.2,340.8 682.7,334.5 683.6,335.0 684.4,340.8 686.1,348.3 687.7,355.8 689.4,362.4 690.5,373.2 691.9,373.6 692.4,367.7 692.9,373.6 695.5,373.6 695.9,345.8 696.2,340.5 700.2,340.5 700.7,349.1 705.2,349.5 705.5,316.7 706.5,316.7 706.8,349.5 708.1,349.5 708.5,316.7 709.6,316.7 710.0,367.7 710.5,367.7 710.8,349.5 711.3,316.7 716.0,316.7 716.5,314.3 717.1,310.6 717.6,302.3 723.8,302.3 724.3,310.6 725.1,310.6 725.6,302.3 726.4,302.3 726.8,314.3 727.6,314.3 727.9,349.1 728.4,373.6 735.9,373.6 736.2,323.1 736.7,340.8 737.0,373.6 745.0,373.6 745.4,349.5 748.8,349.1 749.2,340.8 750.0,331.7 751.7,331.7 752.2,337.5 752.7,349.5 753.3,352.5 758.3,352.5" fill="none" stroke="#ffff00" stroke-width="0.62" stroke-linejoin="round"/><rect x="765" y="291.6" width="219" height="104.5" fill="#22222c"/><text x="765.2" y="286.20" font-size="5.8" fill="#f6f6f6" textLength="32" lengthAdjust="spacingAndGlyphs">MAF(gm/Sec)</text><circle cx="980" cy="285.40" r="2.55" fill="none" stroke="#fff" stroke-width="2.5"/><text transform="translate(981.30 297.50) scale(0.92 1)" font-size="5.92" fill="#ececec" text-anchor="end">Current: 5.15</text><text transform="translate(942.49 297.50) scale(0.92 1)" font-size="5.92" fill="#ececec" text-anchor="end">Max: 67.13</text><text transform="translate(908.53 297.50) scale(0.92 1)" font-size="5.92" fill="#ececec" text-anchor="end">Min: 3.52</text><path d="M785.00 302.20V379.00M784.60 378.60H980.80" stroke="#cfcfcf" stroke-width="0.8" fill="none"/><text transform="translate(780.70 304.40) scale(0.92 1)" font-size="5.65" fill="#ececec" text-anchor="end">67.13</text><text transform="translate(780.70 312.69) scale(0.92 1)" font-size="5.65" fill="#ececec" text-anchor="end">60.00</text><text transform="translate(780.70 324.33) scale(0.92 1)" font-size="5.65" fill="#ececec" text-anchor="end">50.00</text><text transform="translate(780.70 335.96) scale(0.92 1)" font-size="5.65" fill="#ececec" text-anchor="end">40.00</text><text transform="translate(780.70 347.59) scale(0.92 1)" font-size="5.65" fill="#ececec" text-anchor="end">30.00</text><text transform="translate(780.70 359.23) scale(0.92 1)" font-size="5.65" fill="#ececec" text-anchor="end">20.00</text><text transform="translate(780.70 370.86) scale(0.92 1)" font-size="5.65" fill="#ececec" text-anchor="end">10.00</text><text transform="translate(780.70 378.40) scale(0.92 1)" font-size="5.65" fill="#ececec" text-anchor="end">3.52</text><text transform="translate(786.95 383.10) rotate(-90) scale(0.92 1)" font-size="5.65" fill="#ececec" text-anchor="end">0</text><text transform="translate(796.72 383.10) rotate(-90) scale(0.92 1)" font-size="5.65" fill="#ececec" text-anchor="end">100</text><text transform="translate(806.49 383.10) rotate(-90) scale(0.92 1)" font-size="5.65" fill="#ececec" text-anchor="end">200</text><text transform="translate(816.26 383.10) rotate(-90) scale(0.92 1)" font-size="5.65" fill="#ececec" text-anchor="end">300</text><text transform="translate(826.03 383.10) rotate(-90) scale(0.92 1)" font-size="5.65" fill="#ececec" text-anchor="end">400</text><text transform="translate(835.80 383.10) rotate(-90) scale(0.92 1)" font-size="5.65" fill="#ececec" text-anchor="end">500</text><text transform="translate(845.57 383.10) rotate(-90) scale(0.92 1)" font-size="5.65" fill="#ececec" text-anchor="end">600</text><text transform="translate(855.34 383.10) rotate(-90) scale(0.92 1)" font-size="5.65" fill="#ececec" text-anchor="end">700</text><text transform="translate(865.11 383.10) rotate(-90) scale(0.92 1)" font-size="5.65" fill="#ececec" text-anchor="end">800</text><text transform="translate(874.88 383.10) rotate(-90) scale(0.92 1)" font-size="5.65" fill="#ececec" text-anchor="end">900</text><text transform="translate(884.65 383.10) rotate(-90) scale(0.92 1)" font-size="5.65" fill="#ececec" text-anchor="end">1000</text><text transform="translate(894.42 383.10) rotate(-90) scale(0.92 1)" font-size="5.65" fill="#ececec" text-anchor="end">1100</text><text transform="translate(904.19 383.10) rotate(-90) scale(0.92 1)" font-size="5.65" fill="#ececec" text-anchor="end">1200</text><text transform="translate(913.96 383.10) rotate(-90) scale(0.92 1)" font-size="5.65" fill="#ececec" text-anchor="end">1300</text><text transform="translate(923.73 383.10) rotate(-90) scale(0.92 1)" font-size="5.65" fill="#ececec" text-anchor="end">1400</text><text transform="translate(933.50 383.10) rotate(-90) scale(0.92 1)" font-size="5.65" fill="#ececec" text-anchor="end">1500</text><text transform="translate(943.27 383.10) rotate(-90) scale(0.92 1)" font-size="5.65" fill="#ececec" text-anchor="end">1600</text><text transform="translate(953.04 383.10) rotate(-90) scale(0.92 1)" font-size="5.65" fill="#ececec" text-anchor="end">1700</text><text transform="translate(962.81 383.10) rotate(-90) scale(0.92 1)" font-size="5.65" fill="#ececec" text-anchor="end">1800</text><text transform="translate(972.58 383.10) rotate(-90) scale(0.92 1)" font-size="5.65" fill="#ececec" text-anchor="end">1900</text><text transform="translate(982.25 383.10) rotate(-90) scale(0.92 1)" font-size="5.65" fill="#ececec" text-anchor="end">1999</text><path d="M782.40 302.80H785.00M782.40 311.09H785.00M782.40 322.73H785.00M782.40 334.36H785.00M782.40 345.99H785.00M782.40 357.63H785.00M782.40 369.26H785.00M782.40 376.80H785.00M785.00 378.60V381.00M794.77 378.60V381.00M804.54 378.60V381.00M814.31 378.60V381.00M824.08 378.60V381.00M833.85 378.60V381.00M843.62 378.60V381.00M853.39 378.60V381.00M863.16 378.60V381.00M872.93 378.60V381.00M882.70 378.60V381.00M892.47 378.60V381.00M902.24 378.60V381.00M912.01 378.60V381.00M921.78 378.60V381.00M931.55 378.60V381.00M941.32 378.60V381.00M951.09 378.60V381.00M960.86 378.60V381.00M970.63 378.60V381.00M980.30 378.60V381.00" stroke="#cfcfcf" stroke-width="0.7" fill="none"/><path d="M907.03 302.40V377.40" stroke="#5cb4ba" stroke-width="0.8" opacity="0.4"/><path d="M980.30 302.40V377.40" stroke="#0f8a14" stroke-width="0.8"/><polyline points="784.9,375.7 786.6,376.5 788.3,376.5 789.9,374.9 791.6,373.7 793.2,374.1 794.1,369.1 794.9,357.4 795.7,345.0 796.6,344.5 797.4,349.1 798.2,355.0 799.1,357.4 799.6,370.7 800.7,373.2 802.4,373.7 803.2,369.1 804.0,354.1 804.5,340.8 805.7,335.9 806.5,335.5 807.9,339.2 808.5,354.1 809.0,367.4 809.9,369.1 811.2,364.1 812.3,362.4 814.0,361.1 815.2,361.1 815.5,339.2 815.8,362.4 816.8,367.1 818.2,366.6 819.8,364.1 821.5,360.8 822.3,359.9 822.8,364.1 823.1,352.5 823.5,371.6 824.5,367.4 825.6,364.1 826.5,362.4 827.3,369.1 828.1,365.8 828.5,355.8 829.0,367.4 829.8,369.1 830.6,366.6 831.8,370.7 832.8,369.1 833.9,365.8 835.6,367.4 836.8,364.1 837.8,360.8 838.9,360.8 840.6,359.1 842.2,358.8 843.9,357.4 845.1,352.5 846.1,344.2 847.2,338.3 848.1,334.2 848.6,320.9 848.9,305.1 849.4,304.3 850.0,312.6 851.0,314.3 852.2,319.2 853.0,310.9 854.4,307.6 855.5,306.8 856.4,310.9 857.7,315.9 858.9,324.2 860.0,335.9 861.0,342.5 862.2,343.3 863.3,347.5 864.3,355.0 865.5,353.3 867.2,354.5 868.8,354.1 870.5,354.1 871.0,345.8 871.6,330.9 873.0,328.4 874.3,329.2 874.0,329.2 874.8,335.9 875.7,332.5 877.0,320.9 878.2,317.6 879.0,319.2 879.8,325.9 881.0,327.5 882.3,332.5 884.0,337.5 885.3,344.2 886.0,347.5 886.3,302.6 886.6,302.3 887.0,349.1 887.6,352.5 889.0,349.1 890.6,344.2 892.3,342.8 893.9,342.5 895.6,339.5 897.3,340.0 898.9,342.5 899.7,349.1 900.6,357.4 901.4,365.8 902.6,366.6 903.6,359.1 904.2,358.3 904.9,365.8 905.9,369.1 906.9,373.6 908.9,374.1 911.4,374.4 913.9,375.7 915.5,376.0 917.5,374.1 918.9,373.2 920.5,373.6 923.8,373.2 927.2,372.7 930.5,372.4 931.8,370.7 932.5,358.3 933.1,358.3 933.8,370.7 935.5,372.7 936.8,373.6 937.5,365.8 938.5,345.8 939.6,324.2 940.4,317.6 941.3,315.9 942.1,312.6 942.6,304.3 943.4,310.9 944.6,311.8 945.8,312.6 946.8,319.2 947.9,329.2 948.8,345.8 949.6,364.1 950.4,352.5 950.9,364.1 951.7,370.7 952.9,373.6 955.4,374.1 957.9,374.1 958.7,370.7 959.4,345.8 959.9,354.1 960.4,370.7 961.7,373.2 963.7,374.1 967.0,374.1 969.5,373.6 972.0,374.1 975.3,373.6 977.8,373.2 980.3,373.2" fill="none" stroke="#ffff00" stroke-width="0.62" stroke-linejoin="round"/><rect x="321" y="408.8" width="219" height="104.5" fill="#22222c"/><text x="321.2" y="403.40" font-size="5.8" fill="#f6f6f6" textLength="42" lengthAdjust="spacingAndGlyphs">ENGINE LOAD(%)</text><circle cx="536" cy="402.60" r="2.55" fill="none" stroke="#fff" stroke-width="2.5"/><text transform="translate(537.30 414.70) scale(0.92 1)" font-size="5.92" fill="#ececec" text-anchor="end">Current: 8</text><text transform="translate(506.07 414.70) scale(0.92 1)" font-size="5.92" fill="#ececec" text-anchor="end">Max: 91</text><text transform="translate(479.68 414.70) scale(0.92 1)" font-size="5.92" fill="#ececec" text-anchor="end">Min: 8</text><path d="M333.50 419.40V496.20M333.10 495.80H536.80" stroke="#cfcfcf" stroke-width="0.8" fill="none"/><text transform="translate(329.20 421.60) scale(0.92 1)" font-size="5.65" fill="#ececec" text-anchor="end">91</text><text transform="translate(329.20 431.41) scale(0.92 1)" font-size="5.65" fill="#ececec" text-anchor="end">80</text><text transform="translate(329.20 449.24) scale(0.92 1)" font-size="5.65" fill="#ececec" text-anchor="end">60</text><text transform="translate(329.20 467.07) scale(0.92 1)" font-size="5.65" fill="#ececec" text-anchor="end">40</text><text transform="translate(329.20 484.90) scale(0.92 1)" font-size="5.65" fill="#ececec" text-anchor="end">20</text><text transform="translate(329.20 495.60) scale(0.92 1)" font-size="5.65" fill="#ececec" text-anchor="end">8</text><text transform="translate(335.45 500.30) rotate(-90) scale(0.92 1)" font-size="5.65" fill="#ececec" text-anchor="end">0</text><text transform="translate(345.60 500.30) rotate(-90) scale(0.92 1)" font-size="5.65" fill="#ececec" text-anchor="end">100</text><text transform="translate(355.74 500.30) rotate(-90) scale(0.92 1)" font-size="5.65" fill="#ececec" text-anchor="end">200</text><text transform="translate(365.89 500.30) rotate(-90) scale(0.92 1)" font-size="5.65" fill="#ececec" text-anchor="end">300</text><text transform="translate(376.03 500.30) rotate(-90) scale(0.92 1)" font-size="5.65" fill="#ececec" text-anchor="end">400</text><text transform="translate(386.18 500.30) rotate(-90) scale(0.92 1)" font-size="5.65" fill="#ececec" text-anchor="end">500</text><text transform="translate(396.32 500.30) rotate(-90) scale(0.92 1)" font-size="5.65" fill="#ececec" text-anchor="end">600</text><text transform="translate(406.47 500.30) rotate(-90) scale(0.92 1)" font-size="5.65" fill="#ececec" text-anchor="end">700</text><text transform="translate(416.61 500.30) rotate(-90) scale(0.92 1)" font-size="5.65" fill="#ececec" text-anchor="end">800</text><text transform="translate(426.76 500.30) rotate(-90) scale(0.92 1)" font-size="5.65" fill="#ececec" text-anchor="end">900</text><text transform="translate(436.90 500.30) rotate(-90) scale(0.92 1)" font-size="5.65" fill="#ececec" text-anchor="end">1000</text><text transform="translate(447.05 500.30) rotate(-90) scale(0.92 1)" font-size="5.65" fill="#ececec" text-anchor="end">1100</text><text transform="translate(457.19 500.30) rotate(-90) scale(0.92 1)" font-size="5.65" fill="#ececec" text-anchor="end">1200</text><text transform="translate(467.34 500.30) rotate(-90) scale(0.92 1)" font-size="5.65" fill="#ececec" text-anchor="end">1300</text><text transform="translate(477.48 500.30) rotate(-90) scale(0.92 1)" font-size="5.65" fill="#ececec" text-anchor="end">1400</text><text transform="translate(487.63 500.30) rotate(-90) scale(0.92 1)" font-size="5.65" fill="#ececec" text-anchor="end">1500</text><text transform="translate(497.77 500.30) rotate(-90) scale(0.92 1)" font-size="5.65" fill="#ececec" text-anchor="end">1600</text><text transform="translate(507.92 500.30) rotate(-90) scale(0.92 1)" font-size="5.65" fill="#ececec" text-anchor="end">1700</text><text transform="translate(518.06 500.30) rotate(-90) scale(0.92 1)" font-size="5.65" fill="#ececec" text-anchor="end">1800</text><text transform="translate(528.21 500.30) rotate(-90) scale(0.92 1)" font-size="5.65" fill="#ececec" text-anchor="end">1900</text><text transform="translate(538.25 500.30) rotate(-90) scale(0.92 1)" font-size="5.65" fill="#ececec" text-anchor="end">1999</text><path d="M330.90 420.00H333.50M330.90 429.81H333.50M330.90 447.64H333.50M330.90 465.47H333.50M330.90 483.30H333.50M330.90 494.00H333.50M333.50 495.80V498.20M343.65 495.80V498.20M353.79 495.80V498.20M363.94 495.80V498.20M374.08 495.80V498.20M384.23 495.80V498.20M394.37 495.80V498.20M404.52 495.80V498.20M414.66 495.80V498.20M424.81 495.80V498.20M434.95 495.80V498.20M445.10 495.80V498.20M455.24 495.80V498.20M465.39 495.80V498.20M475.53 495.80V498.20M485.68 495.80V498.20M495.82 495.80V498.20M505.97 495.80V498.20M516.11 495.80V498.20M526.26 495.80V498.20M536.30 495.80V498.20" stroke="#cfcfcf" stroke-width="0.7" fill="none"/><path d="M460.21 419.60V494.60" stroke="#5cb4ba" stroke-width="0.8" opacity="0.95"/><path d="M536.30 419.60V494.60" stroke="#0f8a14" stroke-width="0.8"/><polyline points="333.5,492.7 335.1,491.9 336.8,491.1 337.6,488.6 339.3,486.1 340.6,484.7 341.8,485.2 342.9,481.9 343.4,462.8 343.9,446.5 344.6,449.5 345.3,457.8 345.9,461.2 346.7,463.6 347.2,462.0 347.6,466.1 347.9,485.2 349.2,484.4 350.9,484.7 351.7,481.1 352.6,464.5 353.4,452.0 354.2,450.4 355.1,448.7 355.6,445.4 356.7,447.9 357.5,449.5 357.9,481.1 358.9,477.8 360.0,472.8 361.2,468.6 362.5,467.0 364.2,466.1 364.5,431.3 364.9,466.1 365.5,475.3 366.7,473.6 368.3,472.0 369.5,471.1 370.2,466.1 371.2,465.3 371.8,474.4 372.2,441.2 372.8,482.8 373.8,477.8 375.0,474.4 375.8,471.1 376.6,473.6 377.5,476.1 378.3,459.5 378.6,477.8 379.5,474.4 380.5,476.1 381.6,481.1 382.5,477.8 383.8,472.8 385.0,474.4 385.8,476.1 386.6,471.1 387.4,466.1 388.8,465.3 389.9,465.8 391.6,464.5 393.3,464.5 394.1,461.2 395.4,452.9 396.6,448.7 397.7,447.0 398.7,442.9 399.4,424.6 400.1,431.3 401.1,436.2 402.4,441.2 403.2,435.4 404.4,431.3 405.7,428.8 406.7,427.1 407.4,431.3 408.4,427.9 409.4,432.9 410.4,437.1 411.0,449.5 412.0,456.2 413.2,457.8 414.0,457.8 414.9,464.5 415.7,471.1 417.0,470.3 418.2,471.1 419.8,471.5 421.5,471.1 422.0,461.2 422.7,451.2 424.0,445.4 425.3,443.7 426.5,452.0 427.6,449.5 428.6,437.9 429.8,434.6 430.0,432.9 431.3,435.4 432.5,442.9 434.2,451.2 435.8,456.2 437.5,462.8 438.3,465.3 438.6,419.3 439.0,471.1 440.0,470.3 441.6,465.3 443.3,460.3 445.0,459.5 446.6,457.8 448.3,455.3 449.9,456.2 451.6,458.7 452.4,468.6 453.3,469.5 454.1,481.1 454.9,485.2 455.7,483.6 456.6,475.3 457.4,479.4 458.2,486.1 459.1,489.4 459.6,492.7 460.7,493.5 463.2,493.0 465.7,491.9 468.2,490.6 469.9,487.7 471.5,484.7 472.9,485.2 474.9,484.7 477.3,484.4 479.8,484.4 483.2,484.1 484.8,481.1 485.6,474.4 486.1,461.2 486.8,461.2 487.3,479.4 488.1,481.1 489.8,481.9 491.1,482.8 491.8,462.8 492.5,441.2 493.1,447.9 493.8,452.9 494.5,441.2 495.6,439.6 496.8,438.7 497.4,432.9 498.4,433.7 499.4,437.9 500.6,442.9 501.8,441.2 502.4,449.5 503.1,466.1 503.9,469.5 504.4,465.3 505.1,481.1 506.1,489.4 507.2,491.9 508.4,492.7 509.7,489.4 511.4,487.7 513.1,485.2 513.9,481.1 514.4,441.2 514.9,479.4 515.5,481.1 516.4,484.7 518.9,485.2 521.4,485.7 523.0,484.4 524.7,485.7 527.2,486.1 529.7,484.7 532.2,485.2 533.8,484.4 536.3,484.7" fill="none" stroke="#ffff00" stroke-width="0.62" stroke-linejoin="round"/><rect x="543" y="408.8" width="219" height="104.5" fill="#22222c"/><text x="543.2" y="403.40" font-size="5.8" fill="#f6f6f6" textLength="17" lengthAdjust="spacingAndGlyphs">TPS(%)</text><circle cx="758" cy="402.60" r="2.55" fill="none" stroke="#fff" stroke-width="2.5"/><text transform="translate(759.30 414.70) scale(0.92 1)" font-size="5.92" fill="#ececec" text-anchor="end">Current: 8</text><text transform="translate(728.07 414.70) scale(0.92 1)" font-size="5.92" fill="#ececec" text-anchor="end">Max: 42</text><text transform="translate(701.68 414.70) scale(0.92 1)" font-size="5.92" fill="#ececec" text-anchor="end">Min: 4</text><path d="M555.50 419.40V496.20M555.10 495.80H758.80" stroke="#cfcfcf" stroke-width="0.8" fill="none"/><text transform="translate(551.20 421.60) scale(0.92 1)" font-size="5.65" fill="#ececec" text-anchor="end">42</text><text transform="translate(551.20 444.97) scale(0.92 1)" font-size="5.65" fill="#ececec" text-anchor="end">30</text><text transform="translate(551.20 464.44) scale(0.92 1)" font-size="5.65" fill="#ececec" text-anchor="end">20</text><text transform="translate(551.20 483.92) scale(0.92 1)" font-size="5.65" fill="#ececec" text-anchor="end">10</text><text transform="translate(551.20 495.60) scale(0.92 1)" font-size="5.65" fill="#ececec" text-anchor="end">4</text><text transform="translate(557.45 500.30) rotate(-90) scale(0.92 1)" font-size="5.65" fill="#ececec" text-anchor="end">0</text><text transform="translate(567.60 500.30) rotate(-90) scale(0.92 1)" font-size="5.65" fill="#ececec" text-anchor="end">100</text><text transform="translate(577.74 500.30) rotate(-90) scale(0.92 1)" font-size="5.65" fill="#ececec" text-anchor="end">200</text><text transform="translate(587.89 500.30) rotate(-90) scale(0.92 1)" font-size="5.65" fill="#ececec" text-anchor="end">300</text><text transform="translate(598.03 500.30) rotate(-90) scale(0.92 1)" font-size="5.65" fill="#ececec" text-anchor="end">400</text><text transform="translate(608.18 500.30) rotate(-90) scale(0.92 1)" font-size="5.65" fill="#ececec" text-anchor="end">500</text><text transform="translate(618.32 500.30) rotate(-90) scale(0.92 1)" font-size="5.65" fill="#ececec" text-anchor="end">600</text><text transform="translate(628.47 500.30) rotate(-90) scale(0.92 1)" font-size="5.65" fill="#ececec" text-anchor="end">700</text><text transform="translate(638.61 500.30) rotate(-90) scale(0.92 1)" font-size="5.65" fill="#ececec" text-anchor="end">800</text><text transform="translate(648.76 500.30) rotate(-90) scale(0.92 1)" font-size="5.65" fill="#ececec" text-anchor="end">900</text><text transform="translate(658.90 500.30) rotate(-90) scale(0.92 1)" font-size="5.65" fill="#ececec" text-anchor="end">1000</text><text transform="translate(669.05 500.30) rotate(-90) scale(0.92 1)" font-size="5.65" fill="#ececec" text-anchor="end">1100</text><text transform="translate(679.19 500.30) rotate(-90) scale(0.92 1)" font-size="5.65" fill="#ececec" text-anchor="end">1200</text><text transform="translate(689.34 500.30) rotate(-90) scale(0.92 1)" font-size="5.65" fill="#ececec" text-anchor="end">1300</text><text transform="translate(699.48 500.30) rotate(-90) scale(0.92 1)" font-size="5.65" fill="#ececec" text-anchor="end">1400</text><text transform="translate(709.63 500.30) rotate(-90) scale(0.92 1)" font-size="5.65" fill="#ececec" text-anchor="end">1500</text><text transform="translate(719.77 500.30) rotate(-90) scale(0.92 1)" font-size="5.65" fill="#ececec" text-anchor="end">1600</text><text transform="translate(729.92 500.30) rotate(-90) scale(0.92 1)" font-size="5.65" fill="#ececec" text-anchor="end">1700</text><text transform="translate(740.06 500.30) rotate(-90) scale(0.92 1)" font-size="5.65" fill="#ececec" text-anchor="end">1800</text><text transform="translate(750.21 500.30) rotate(-90) scale(0.92 1)" font-size="5.65" fill="#ececec" text-anchor="end">1900</text><text transform="translate(760.25 500.30) rotate(-90) scale(0.92 1)" font-size="5.65" fill="#ececec" text-anchor="end">1999</text><path d="M552.90 420.00H555.50M552.90 443.37H555.50M552.90 462.84H555.50M552.90 482.32H555.50M552.90 494.00H555.50M555.50 495.80V498.20M565.65 495.80V498.20M575.79 495.80V498.20M585.94 495.80V498.20M596.08 495.80V498.20M606.23 495.80V498.20M616.37 495.80V498.20M626.52 495.80V498.20M636.66 495.80V498.20M646.81 495.80V498.20M656.95 495.80V498.20M667.10 495.80V498.20M677.24 495.80V498.20M687.39 495.80V498.20M697.53 495.80V498.20M707.68 495.80V498.20M717.82 495.80V498.20M727.97 495.80V498.20M738.11 495.80V498.20M748.26 495.80V498.20M758.30 495.80V498.20" stroke="#cfcfcf" stroke-width="0.7" fill="none"/><path d="M682.21 419.60V494.60" stroke="#5cb4ba" stroke-width="0.8" opacity="0.45"/><path d="M758.30 419.60V494.60" stroke="#0f8a14" stroke-width="0.8"/><polyline points="555.5,491.1 556.6,493.5 559.3,493.5 559.9,489.4 560.9,486.1 562.1,484.7 563.8,484.7 564.9,481.1 565.6,466.1 566.3,447.9 567.3,445.4 567.9,448.7 568.6,456.2 569.6,456.5 570.2,474.4 571.2,481.1 572.2,484.7 573.2,485.7 573.9,481.1 574.6,464.5 575.4,446.2 576.2,440.9 579.2,440.6 579.5,471.1 580.5,474.4 581.5,472.0 582.5,466.1 583.7,464.5 584.9,462.8 585.9,463.6 586.9,464.5 587.2,440.4 587.5,457.8 588.2,469.5 589.8,469.5 591.2,466.1 592.5,462.5 593.7,462.0 594.2,471.1 594.5,450.4 594.8,457.8 595.5,479.4 596.2,471.1 597.0,473.6 597.8,464.5 598.6,467.8 599.5,471.1 600.1,460.3 600.5,475.3 601.1,473.6 602.5,468.6 603.5,476.9 604.5,474.4 605.3,468.6 606.5,467.8 607.5,470.3 608.1,471.1 609.1,464.5 609.8,462.5 611.4,462.5 612.8,461.2 614.4,460.8 616.1,460.3 617.4,456.2 618.1,449.5 619.1,442.9 620.2,440.4 621.1,436.2 621.6,419.6 622.4,419.6 623.1,426.3 624.4,430.4 625.4,427.9 626.9,424.6 628.5,422.1 629.4,424.6 631.0,425.4 632.4,431.3 633.0,437.9 633.7,443.7 635.2,445.4 636.4,447.9 637.4,449.5 638.0,454.5 639.0,448.7 640.2,451.2 641.3,452.5 644.0,452.5 644.7,437.9 646.0,436.2 647.3,434.6 648.3,440.4 649.6,438.7 651.0,437.9 651.8,428.8 652.0,428.3 653.3,428.8 654.5,432.9 656.2,437.9 657.8,441.2 659.5,447.0 660.3,448.7 660.6,427.1 661.0,447.9 662.0,450.4 663.0,444.5 664.0,438.7 664.6,443.7 666.1,444.5 667.8,445.4 669.4,442.9 671.1,442.9 671.9,444.5 673.9,444.9 674.6,451.2 675.3,452.9 675.9,469.5 677.7,469.5 678.6,458.7 679.4,458.7 679.9,469.5 680.9,474.4 681.6,479.4 681.9,485.7 685.2,485.2 686.1,486.9 687.2,488.6 688.5,491.1 689.9,493.0 691.9,493.0 692.7,489.4 693.5,483.6 694.5,486.1 695.5,483.6 696.5,485.2 697.7,483.6 700.2,483.6 702.7,483.1 705.2,482.8 706.5,481.1 707.6,478.6 708.1,457.8 708.8,457.8 709.3,476.1 710.1,478.6 711.0,481.1 713.1,481.1 713.8,466.1 714.5,444.5 715.5,436.2 716.5,432.1 717.6,429.6 718.8,427.6 720.1,425.4 720.9,424.9 722.1,427.1 723.1,430.4 724.3,434.6 724.8,449.5 725.4,475.3 726.1,447.9 726.8,451.2 727.4,471.1 728.1,479.4 729.2,486.9 730.9,487.4 732.1,486.1 733.1,489.4 734.2,486.1 735.1,481.1 735.9,467.8 736.4,446.2 736.9,464.5 737.5,479.4 738.4,484.4 740.0,484.7 741.7,486.9 743.0,485.2 745.0,485.7 746.4,484.7 747.5,486.4 749.2,485.2 751.7,485.2 754.2,484.7 755.8,483.6 757.5,484.4 758.3,485.7" fill="none" stroke="#ffff00" stroke-width="0.62" stroke-linejoin="round"/><rect x="765" y="408.8" width="219" height="104.5" fill="#22222c"/><text x="765.2" y="403.40" font-size="5.8" fill="#f6f6f6" textLength="27" lengthAdjust="spacingAndGlyphs">MAP (inHg)</text><circle cx="980" cy="402.60" r="2.55" fill="none" stroke="#fff" stroke-width="2.5"/><text transform="translate(981.30 414.70) scale(0.92 1)" font-size="5.92" fill="#ececec" text-anchor="end">Current: 6.7</text><text transform="translate(945.52 414.70) scale(0.92 1)" font-size="5.92" fill="#ececec" text-anchor="end">Max: 25.9</text><text transform="translate(914.59 414.70) scale(0.92 1)" font-size="5.92" fill="#ececec" text-anchor="end">Min: 5.9</text><path d="M782.10 419.40V496.20M781.70 495.80H980.80" stroke="#cfcfcf" stroke-width="0.8" fill="none"/><text transform="translate(777.80 421.60) scale(0.92 1)" font-size="5.65" fill="#ececec" text-anchor="end">25.9</text><text transform="translate(777.80 443.43) scale(0.92 1)" font-size="5.65" fill="#ececec" text-anchor="end">20.0</text><text transform="translate(777.80 461.93) scale(0.92 1)" font-size="5.65" fill="#ececec" text-anchor="end">15.0</text><text transform="translate(777.80 480.43) scale(0.92 1)" font-size="5.65" fill="#ececec" text-anchor="end">10.0</text><text transform="translate(777.80 495.60) scale(0.92 1)" font-size="5.65" fill="#ececec" text-anchor="end">5.9</text><text transform="translate(784.05 500.30) rotate(-90) scale(0.92 1)" font-size="5.65" fill="#ececec" text-anchor="end">0</text><text transform="translate(793.96 500.30) rotate(-90) scale(0.92 1)" font-size="5.65" fill="#ececec" text-anchor="end">100</text><text transform="translate(803.88 500.30) rotate(-90) scale(0.92 1)" font-size="5.65" fill="#ececec" text-anchor="end">200</text><text transform="translate(813.79 500.30) rotate(-90) scale(0.92 1)" font-size="5.65" fill="#ececec" text-anchor="end">300</text><text transform="translate(823.71 500.30) rotate(-90) scale(0.92 1)" font-size="5.65" fill="#ececec" text-anchor="end">400</text><text transform="translate(833.62 500.30) rotate(-90) scale(0.92 1)" font-size="5.65" fill="#ececec" text-anchor="end">500</text><text transform="translate(843.54 500.30) rotate(-90) scale(0.92 1)" font-size="5.65" fill="#ececec" text-anchor="end">600</text><text transform="translate(853.45 500.30) rotate(-90) scale(0.92 1)" font-size="5.65" fill="#ececec" text-anchor="end">700</text><text transform="translate(863.37 500.30) rotate(-90) scale(0.92 1)" font-size="5.65" fill="#ececec" text-anchor="end">800</text><text transform="translate(873.28 500.30) rotate(-90) scale(0.92 1)" font-size="5.65" fill="#ececec" text-anchor="end">900</text><text transform="translate(883.20 500.30) rotate(-90) scale(0.92 1)" font-size="5.65" fill="#ececec" text-anchor="end">1000</text><text transform="translate(893.11 500.30) rotate(-90) scale(0.92 1)" font-size="5.65" fill="#ececec" text-anchor="end">1100</text><text transform="translate(903.03 500.30) rotate(-90) scale(0.92 1)" font-size="5.65" fill="#ececec" text-anchor="end">1200</text><text transform="translate(912.94 500.30) rotate(-90) scale(0.92 1)" font-size="5.65" fill="#ececec" text-anchor="end">1300</text><text transform="translate(922.86 500.30) rotate(-90) scale(0.92 1)" font-size="5.65" fill="#ececec" text-anchor="end">1400</text><text transform="translate(932.77 500.30) rotate(-90) scale(0.92 1)" font-size="5.65" fill="#ececec" text-anchor="end">1500</text><text transform="translate(942.69 500.30) rotate(-90) scale(0.92 1)" font-size="5.65" fill="#ececec" text-anchor="end">1600</text><text transform="translate(952.60 500.30) rotate(-90) scale(0.92 1)" font-size="5.65" fill="#ececec" text-anchor="end">1700</text><text transform="translate(962.52 500.30) rotate(-90) scale(0.92 1)" font-size="5.65" fill="#ececec" text-anchor="end">1800</text><text transform="translate(972.43 500.30) rotate(-90) scale(0.92 1)" font-size="5.65" fill="#ececec" text-anchor="end">1900</text><text transform="translate(982.25 500.30) rotate(-90) scale(0.92 1)" font-size="5.65" fill="#ececec" text-anchor="end">1999</text><path d="M779.50 420.00H782.10M779.50 441.83H782.10M779.50 460.33H782.10M779.50 478.83H782.10M779.50 494.00H782.10M782.10 495.80V498.20M792.01 495.80V498.20M801.93 495.80V498.20M811.84 495.80V498.20M821.76 495.80V498.20M831.67 495.80V498.20M841.59 495.80V498.20M851.50 495.80V498.20M861.42 495.80V498.20M871.33 495.80V498.20M881.25 495.80V498.20M891.16 495.80V498.20M901.08 495.80V498.20M910.99 495.80V498.20M920.91 495.80V498.20M930.82 495.80V498.20M940.74 495.80V498.20M950.65 495.80V498.20M960.57 495.80V498.20M970.48 495.80V498.20M980.30 495.80V498.20" stroke="#cfcfcf" stroke-width="0.7" fill="none"/><path d="M905.94 419.60V494.60" stroke="#5cb4ba" stroke-width="0.8" opacity="0.45"/><path d="M980.30 419.60V494.60" stroke="#0f8a14" stroke-width="0.8"/><polyline points="782.1,487.4 783.6,486.9 784.9,482.8 785.8,478.6 786.6,474.4 787.4,477.8 788.3,475.3 789.6,476.1 790.7,473.6 791.9,471.1 792.4,447.9 793.2,447.0 793.7,456.2 794.6,462.8 795.4,461.2 795.9,464.5 796.6,479.4 797.4,486.1 798.2,481.1 799.6,479.4 800.4,471.1 801.2,466.1 801.7,451.2 802.4,449.5 803.5,447.0 804.5,444.2 805.4,447.9 805.9,479.4 806.5,481.1 807.4,474.4 807.9,449.5 808.5,441.2 809.2,439.6 809.5,467.8 810.7,467.8 811.8,467.0 813.2,468.1 813.7,442.1 814.5,447.0 815.7,446.2 816.8,442.9 817.8,438.7 818.5,465.3 819.5,462.8 820.1,451.2 820.5,473.6 821.1,454.5 821.8,444.5 822.5,449.5 823.1,439.6 823.8,466.1 824.5,471.1 825.1,472.8 825.8,452.9 826.8,450.4 828.1,445.4 828.8,456.2 829.8,452.9 830.8,447.9 831.8,441.2 832.8,440.4 833.4,445.4 834.1,438.7 834.8,449.5 835.6,464.5 837.3,465.3 838.9,464.1 840.6,463.6 842.2,462.8 843.1,456.2 843.9,447.9 845.1,443.7 846.1,442.1 846.4,419.6 847.2,421.3 848.1,427.9 849.4,433.7 850.4,426.3 851.4,423.0 852.7,422.1 853.9,423.8 854.7,424.6 855.7,420.5 856.7,426.3 857.7,441.2 858.7,452.9 859.7,456.2 861.0,457.8 862.0,459.5 862.5,468.6 863.0,441.2 863.8,434.6 864.7,438.7 866.3,437.9 868.0,437.6 869.0,437.1 869.3,421.3 869.8,445.4 871.0,441.2 872.1,442.1 873.3,443.7 874.0,448.7 874.0,446.2 875.3,445.4 876.0,432.9 877.0,427.1 878.0,427.9 879.0,434.6 880.3,439.6 881.5,451.2 882.6,452.9 883.6,457.8 884.6,463.6 885.3,456.2 885.6,431.3 886.3,437.9 887.0,436.2 888.0,426.3 889.0,424.3 889.4,426.3 889.9,457.8 891.4,459.5 893.1,457.8 894.3,452.9 895.3,452.0 896.4,456.2 897.6,457.0 898.3,464.5 898.9,478.6 899.4,466.1 900.2,470.3 901.4,467.8 902.2,456.2 903.1,449.5 903.9,471.1 904.7,472.0 905.2,479.4 905.9,490.6 907.2,491.1 909.2,490.6 911.4,489.4 913.0,486.1 914.7,481.1 915.9,476.1 916.9,473.6 917.7,472.0 918.5,477.8 919.7,475.3 921.3,474.4 923.8,474.1 926.3,473.6 928.8,473.1 930.5,472.0 931.5,461.2 932.1,462.0 932.6,474.4 933.5,480.3 934.5,474.4 935.8,472.0 936.8,466.1 937.8,447.9 938.8,446.2 939.4,451.2 940.1,444.5 940.8,432.9 941.4,435.4 942.4,428.8 943.4,425.4 944.4,427.9 945.4,434.6 946.1,437.9 946.8,432.9 947.4,457.8 948.1,441.2 948.8,447.9 949.4,429.6 949.9,477.8 950.7,489.4 951.4,493.5 952.1,489.4 953.1,492.7 954.1,489.4 955.4,487.7 956.4,476.1 957.4,473.6 958.4,476.1 959.0,464.5 959.4,446.2 959.9,474.4 960.7,481.1 961.7,487.7 962.4,474.4 963.4,482.8 964.5,479.4 965.7,480.3 966.7,477.8 967.4,472.0 968.0,470.3 968.7,477.8 969.5,473.6 970.3,481.1 972.0,480.3 973.7,479.8 975.7,478.6 977.8,479.1 979.0,479.8 980.3,479.8" fill="none" stroke="#ffff00" stroke-width="0.62" stroke-linejoin="round"/></svg>
</div></body></html>
